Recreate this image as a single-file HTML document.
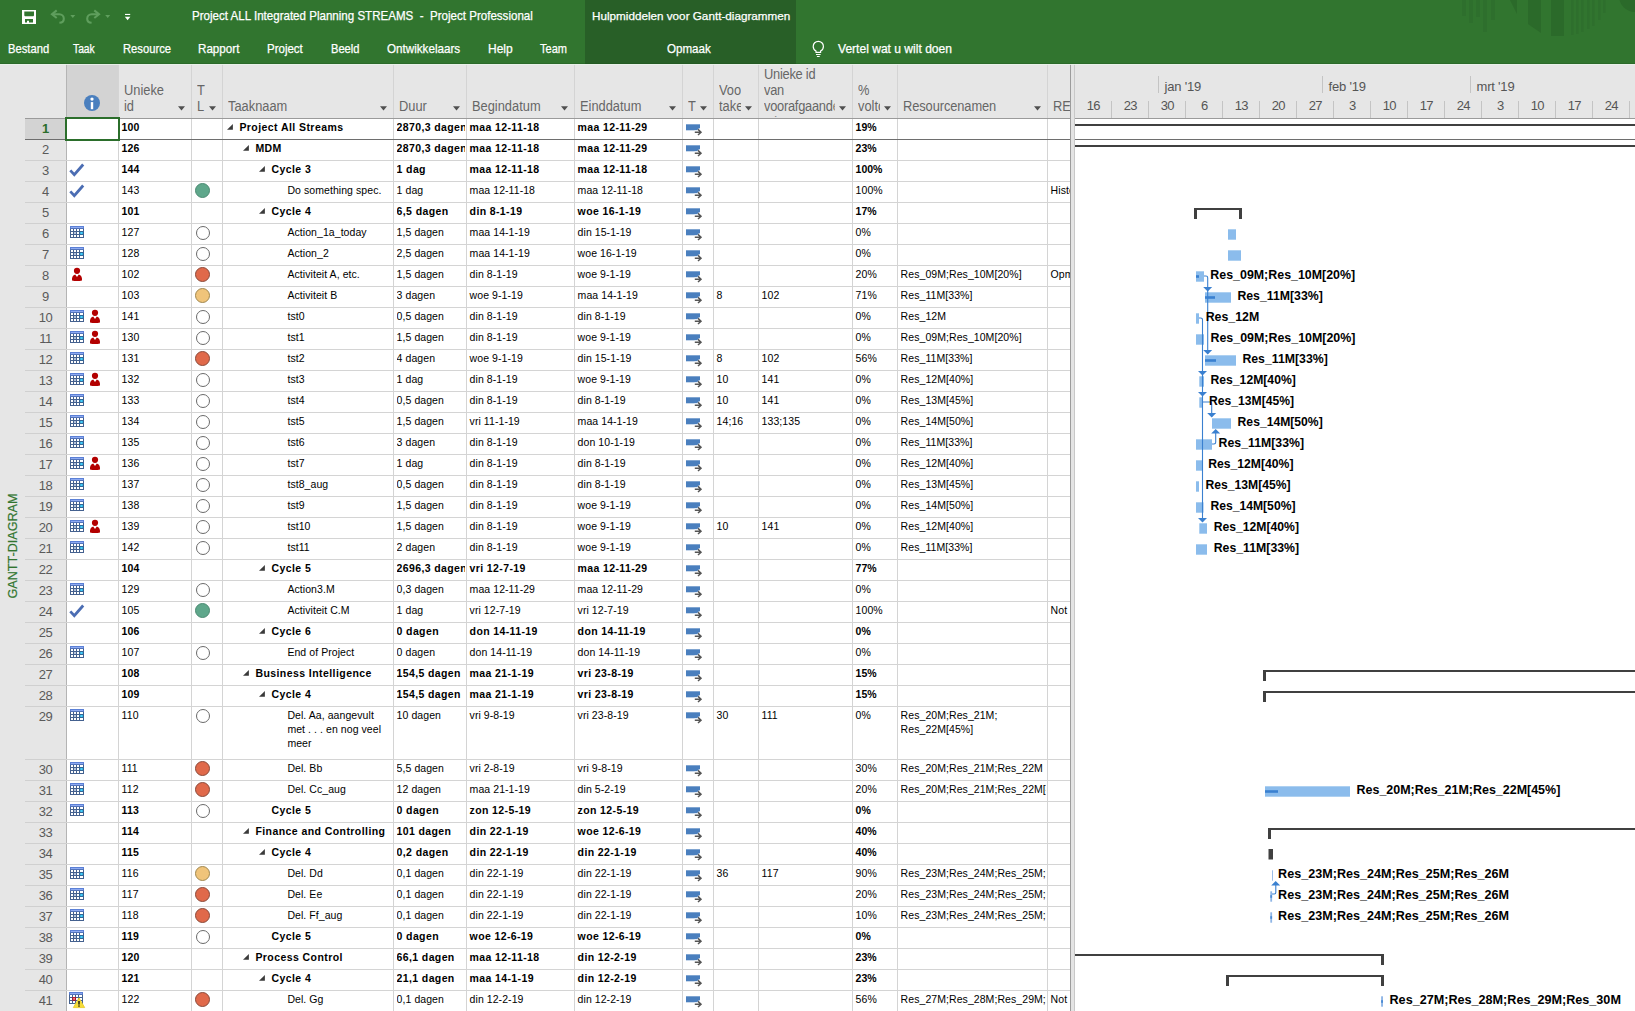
<!DOCTYPE html>
<html lang="nl"><head><meta charset="utf-8"><title>Project ALL Integrated Planning STREAMS - Project Professional</title>
<style>
*{box-sizing:border-box}
html,body{margin:0;padding:0}
body{width:1635px;height:1011px;overflow:hidden;position:relative;background:#fff;font-family:"Liberation Sans",Arial,sans-serif;}
.abs{position:absolute}
#ribbon{position:absolute;left:0;top:0;width:1635px;height:64px;background:#31752f;overflow:hidden}
#ctx{position:absolute;left:585px;top:0;width:211px;height:64px;background:#285f27}
.rt{position:absolute;color:#fff;font-size:11.6px;white-space:nowrap;line-height:14px;-webkit-text-stroke:.25px #fff}
#side{position:absolute;left:0;top:64px;width:25px;height:947px;background:#e6e6e6}
#vt{position:absolute;left:12.5px;top:482px;width:0;height:0}
#vt span{position:absolute;display:block;white-space:nowrap;color:#31752f;-webkit-text-stroke:.2px #31752f;font-size:12.6px;line-height:14px;transform:translate(-50%,-50%) rotate(-90deg);transform-origin:50% 50%;left:0;top:0}
#thead{position:absolute;left:25px;top:64px;width:1045px;height:55px;background:#e6e6e6;border-bottom:1px solid #9a9a9a}
.hc{position:absolute;top:0;height:54px;border-left:1px solid #d4d4d4;overflow:hidden}
.ht{position:absolute;left:5px;bottom:4.2px;color:#666;font-size:14px;line-height:16px;white-space:nowrap;overflow:hidden;transform:scaleX(.918);transform-origin:0 100%}
.dd{position:absolute;bottom:7px;width:0;height:0;border-left:3.7px solid transparent;border-right:3.7px solid transparent;border-top:4.2px solid #555}
#rows{position:absolute;left:25px;top:119px;width:1045px;height:892px;background:#fff;overflow:hidden}
.r{position:absolute;left:0;width:1045px;border-bottom:1px solid #d4d4d4}
.rn{position:absolute;left:0;top:0;width:41px;bottom:-1px;background:#e6e6e6;border-bottom:1px solid #d0d0d0;color:#5a5a5a;font-size:13px;line-height:15px;text-align:center;padding-top:2px;letter-spacing:-.45px}
.c{position:absolute;top:0;bottom:0;border-left:1px solid #d4d4d4;font-size:10.5px;letter-spacing:.07px;line-height:14px;padding:.8px 0 0 2.6px;white-space:nowrap;overflow:hidden;color:#000}
.b .c{font-weight:bold;font-size:10.5px;letter-spacing:.38px}
.w{white-space:normal}
.circ{position:absolute;left:2.8px;top:1px;width:15.4px;height:15.4px;border-radius:50%;border:1px solid #555}
.tri{position:absolute;top:5px;width:0;height:0;border-bottom:5.7px solid #404040;border-left:5.9px solid transparent}
svg{position:absolute;left:0;top:0;overflow:visible}
#divider{position:absolute;left:1070px;top:64px;width:5px;height:947px;background:#e4e4e4;border-left:1px solid #9c9c9c;border-right:1px solid #c8c8c8}
#ghead{position:absolute;left:1075px;top:64px;width:560px;height:55px;background:#e6e6e6;border-bottom:1px solid #9a9a9a;overflow:hidden}
.gt{position:absolute;color:#555;font-size:13px;line-height:15px;white-space:nowrap}
</style></head><body>

<div id="ribbon">
<svg width="1635" height="64" viewBox="0 0 1635 64">
<rect x="1462" y="0" width="4" height="16" fill="#2e6f2d"/>
<rect x="1469" y="0" width="4" height="23" fill="#2e6f2d"/>
<rect x="1476" y="0" width="4" height="17" fill="#2e6f2d"/>
<rect x="1483" y="0" width="4" height="32" fill="#2e6f2d"/>
<rect x="1491" y="0" width="4" height="20" fill="#2e6f2d"/>
<polygon points="1510,0 1517,0 1517,14" fill="#2b6a2a"/>
<polygon points="1528,0 1541,0 1541,33 1528,24" fill="#2b6a2a"/>
<rect x="1551" y="0" width="13" height="36" fill="#2b6a2a"/>
<rect x="1571" y="0" width="2.5" height="35" fill="#2e6f2d"/>
<rect x="1576" y="0" width="2.5" height="34" fill="#2e6f2d"/>
<rect x="1581" y="0" width="2.5" height="32" fill="#2e6f2d"/>
<rect x="1587" y="0" width="2.5" height="29" fill="#2e6f2d"/>
<rect x="1592" y="0" width="2.5" height="26" fill="#2e6f2d"/>
<rect x="1598" y="0" width="2.5" height="20" fill="#2e6f2d"/>
<rect x="1603" y="0" width="2.5" height="13" fill="#2e6f2d"/>
<circle cx="1635" cy="-4" r="16" fill="#2b6a2a"/>
</svg>
<div class="abs" style="left:0;top:63px;width:1635px;height:1px;background:#2b6a2a"></div>
<div id="ctx"></div>
<div class="abs" style="left:585px;top:63px;width:211px;height:1px;background:#245a23"></div>
<svg width="160" height="40" viewBox="0 0 160 40">
<rect x="22" y="10" width="14" height="14" fill="#fff"/>
<polygon points="24.300,11.400 34,11.400 34,15.600 33.300,16.300 25,16.300 24.300,15.600" fill="#31752f"/>
<path d="M25 19h8v3.500h-4v-1.700h-2v1.700h-2z" fill="#31752f"/>
<g fill="none" stroke="#5f9e5d" stroke-width="2.100" stroke-linecap="butt" stroke-linejoin="miter">
<path d="M56.700 10.400L52 14.200l4.700 3.800"/><path d="M52.800 14.200H59.300a4.500 4.500 0 0 1 4.500 4.500c0 2.300-1.800 3.900-4.400 4.100"/>
<path d="M94.300 10.400L99 14.200l-4.700 3.800"/><path d="M98.200 14.200H91.700a4.500 4.500 0 0 0-4.500 4.500c0 2.300 1.800 3.900 4.400 4.100"/>
</g>
<polygon points="70.300,15 75.300,15 72.800,17.900" fill="#5f9e5d"/>
<polygon points="105.200,15 110.200,15 107.700,17.900" fill="#5f9e5d"/>
<rect x="125" y="13.900" width="5.200" height="1.100" fill="#fff"/>
<polygon points="124.800,16.800 130.400,16.800 127.600,20.200" fill="#fff"/>
</svg>
<div class="rt" style="left:8.40px;top:41.57px;font-size:12.2px;transform:scaleX(0.9200);transform-origin:0 0">Bestand</div>
<div class="rt" style="left:73.20px;top:41.57px;font-size:12.2px;transform:scaleX(0.8444);transform-origin:0 0">Taak</div>
<div class="rt" style="left:123.30px;top:41.57px;font-size:12.2px;transform:scaleX(0.9212);transform-origin:0 0">Resource</div>
<div class="rt" style="left:198.00px;top:41.57px;font-size:12.2px;transform:scaleX(0.9545);transform-origin:0 0">Rapport</div>
<div class="rt" style="left:267.20px;top:41.57px;font-size:12.2px;transform:scaleX(0.9436);transform-origin:0 0">Project</div>
<div class="rt" style="left:331.30px;top:41.57px;font-size:12.2px;transform:scaleX(0.9129);transform-origin:0 0">Beeld</div>
<div class="rt" style="left:387.20px;top:41.57px;font-size:12.2px;transform:scaleX(0.9558);transform-origin:0 0">Ontwikkelaars</div>
<div class="rt" style="left:488.00px;top:41.57px;font-size:12.2px;transform:scaleX(0.9840);transform-origin:0 0">Help</div>
<div class="rt" style="left:540.20px;top:41.57px;font-size:12.2px;transform:scaleX(0.9067);transform-origin:0 0">Team</div>
<div class="rt" style="left:667.30px;top:41.57px;font-size:12.2px;transform:scaleX(0.9511);transform-origin:0 0">Opmaak</div>
<div class="rt" style="left:192.20px;top:8.97px;font-size:12.2px;transform:scaleX(0.9487);transform-origin:0 0">Project ALL Integrated Planning STREAMS&nbsp; - &nbsp;Project Professional</div>
<div class="rt" style="left:592.30px;top:9.11px;font-size:11.8px;transform:scaleX(0.9915);transform-origin:0 0">Hulpmiddelen voor Gantt-diagrammen</div>
<div class="rt" style="left:838.30px;top:41.57px;font-size:12.2px;transform:scaleX(0.9896);transform-origin:0 0">Vertel wat u wilt doen</div>
<svg width="1635" height="64" viewBox="0 0 1635 64"><g fill="none" stroke="#fff" stroke-width="1.200">
<path d="M816 52.400v-1.300c-1.700-1-2.800-2.700-2.800-4.700a5.100 5.100 0 0 1 10.200 0c0 2-1.100 3.700-2.800 4.700v1.300z"/>
<path d="M816 54.500h4.600M816.900 56.500h2.800"/></g></svg>
</div>
<div id="side"><div id="vt"><span>GANTT-DIAGRAM</span></div></div>
<div id="thead">
<div class="abs" style="left:42px;top:0;width:51px;height:54px;background:#d3d3d3"></div>
<div class="hc" style="left:41px;width:52px;border-left-color:#b4b4b4">
</div>
<div class="hc" style="left:93px;width:73px;border-left-color:#d4d4d4">
<div class="ht" style="width:54.5px">Unieke<br>id</div>
<svg class="ic" style="right:5.800px;bottom:7px;left:auto;top:auto" width="7" height="5" viewBox="0 0 7 5"><polygon points="0,0.300 7,0.300 3.500,4.400" fill="#505050"/></svg>
</div>
<div class="hc" style="left:166px;width:31px;border-left-color:#d4d4d4">
<div class="ht" style="width:8.7px">T<br>L</div>
<svg class="ic" style="right:5.800px;bottom:7px;left:auto;top:auto" width="7" height="5" viewBox="0 0 7 5"><polygon points="0,0.300 7,0.300 3.500,4.400" fill="#505050"/></svg>
</div>
<div class="hc" style="left:197px;width:171px;border-left-color:#d4d4d4">
<div class="ht" style="width:161.2px">Taaknaam</div>
<svg class="ic" style="right:5.800px;bottom:7px;left:auto;top:auto" width="7" height="5" viewBox="0 0 7 5"><polygon points="0,0.300 7,0.300 3.500,4.400" fill="#505050"/></svg>
</div>
<div class="hc" style="left:368px;width:73px;border-left-color:#d4d4d4">
<div class="ht" style="width:54.5px">Duur</div>
<svg class="ic" style="right:5.800px;bottom:7px;left:auto;top:auto" width="7" height="5" viewBox="0 0 7 5"><polygon points="0,0.300 7,0.300 3.500,4.400" fill="#505050"/></svg>
</div>
<div class="hc" style="left:441px;width:108px;border-left-color:#d4d4d4">
<div class="ht" style="width:92.6px">Begindatum</div>
<svg class="ic" style="right:5.800px;bottom:7px;left:auto;top:auto" width="7" height="5" viewBox="0 0 7 5"><polygon points="0,0.300 7,0.300 3.500,4.400" fill="#505050"/></svg>
</div>
<div class="hc" style="left:549px;width:108px;border-left-color:#d4d4d4">
<div class="ht" style="width:92.6px">Einddatum</div>
<svg class="ic" style="right:5.800px;bottom:7px;left:auto;top:auto" width="7" height="5" viewBox="0 0 7 5"><polygon points="0,0.300 7,0.300 3.500,4.400" fill="#505050"/></svg>
</div>
<div class="hc" style="left:657px;width:31px;border-left-color:#d4d4d4">
<div class="ht" style="width:8.7px">T</div>
<svg class="ic" style="right:5.800px;bottom:7px;left:auto;top:auto" width="7" height="5" viewBox="0 0 7 5"><polygon points="0,0.300 7,0.300 3.500,4.400" fill="#505050"/></svg>
</div>
<div class="hc" style="left:688px;width:45px;border-left-color:#d4d4d4">
<div class="ht" style="width:24.0px">Voo<br>take</div>
<svg class="ic" style="right:5.800px;bottom:7px;left:auto;top:auto" width="7" height="5" viewBox="0 0 7 5"><polygon points="0,0.300 7,0.300 3.500,4.400" fill="#505050"/></svg>
</div>
<div class="hc" style="left:733px;width:94px;border-left-color:#d4d4d4">
<div class="ht" style="width:77.3px;bottom:-12px;height:64px;clip-path:inset(0 0 13.200px 0);letter-spacing:-0.28px">Unieke id<br>van<br>voorafgaande<br>taken</div>
<svg class="ic" style="right:5.800px;bottom:7px;left:auto;top:auto" width="7" height="5" viewBox="0 0 7 5"><polygon points="0,0.300 7,0.300 3.500,4.400" fill="#505050"/></svg>
</div>
<div class="hc" style="left:827px;width:45px;border-left-color:#d4d4d4">
<div class="ht" style="width:24.0px">%<br>volto</div>
<svg class="ic" style="right:5.800px;bottom:7px;left:auto;top:auto" width="7" height="5" viewBox="0 0 7 5"><polygon points="0,0.300 7,0.300 3.500,4.400" fill="#505050"/></svg>
</div>
<div class="hc" style="left:872px;width:150px;border-left-color:#d4d4d4">
<div class="ht" style="width:138.3px;letter-spacing:-0.1px">Resourcenamen</div>
<svg class="ic" style="right:5.800px;bottom:7px;left:auto;top:auto" width="7" height="5" viewBox="0 0 7 5"><polygon points="0,0.300 7,0.300 3.500,4.400" fill="#505050"/></svg>
</div>
<div class="hc" style="left:1022px;width:23px;border-left-color:#d4d4d4">
<div class="ht" style="width:18.5px">RE</div>
</div>
<svg width="1045" height="55" viewBox="25 64 1045 55"><circle cx="92" cy="103" r="8" fill="#4a7fbe"/><circle cx="92" cy="99.100" r="1.650" fill="#fff"/><rect x="90.800" y="102.100" width="2.400" height="7.100" fill="#fff"/></svg>
</div>
<style>.ic{position:absolute;left:auto;top:auto}</style>
<div id="rows">
<div class="r b" style="top:0px;height:21px">
<div class="rn" style="background:#d3d3d3;color:#2b6e2b;font-weight:bold">1</div>
<div class="c" style="left:41px;width:52px ;border-left-color:#b4b4b4"></div>
<div class="c" style="left:93px;width:73px;letter-spacing:.1px">100</div>
<div class="c" style="left:166px;width:31px"></div>
<div class="c" style="left:197px;width:171px;padding-left:16.4px;letter-spacing:.43px"><svg class="ic" style="left:3.8px;top:5.4px" width="7" height="7" viewBox="0 0 7 7"><polygon points="5.900,0 5.900,5.700 0,5.700" fill="#3a3a3a"/></svg>Project All Streams</div>
<div class="c" style="left:368px;width:73px"><div style="overflow:hidden;width:68px">2870,3 dagen</div></div>
<div class="c" style="left:441px;width:108px">maa 12-11-18</div>
<div class="c" style="left:549px;width:108px">maa 12-11-29</div>
<div class="c" style="left:657px;width:31px"><svg class="ic" style="left:3px;top:5px" width="18" height="13" viewBox="0 0 18 13"><rect x="0" y="0.300" width="14" height="6" fill="#4a7fbe"/><path d="M8.500 8.200h6M12 5.200l3.200 3-3.200 3" fill="none" stroke="#fff" stroke-width="3.400"/><path d="M8.800 8.200h6M12 5.400l3 2.800-3 2.800" fill="none" stroke="#555" stroke-width="1.500"/></svg></div>
<div class="c" style="left:688px;width:45px"></div>
<div class="c" style="left:733px;width:94px"></div>
<div class="c" style="left:827px;width:45px;letter-spacing:0">19%</div>
<div class="c" style="left:872px;width:150px;padding-right:3px"></div>
<div class="c" style="left:1022px;width:23px"></div>
</div>
<div class="r b" style="top:21px;height:21px">
<div class="rn">2</div>
<div class="c" style="left:41px;width:52px ;border-left-color:#b4b4b4"></div>
<div class="c" style="left:93px;width:73px;letter-spacing:.1px">126</div>
<div class="c" style="left:166px;width:31px"></div>
<div class="c" style="left:197px;width:171px;padding-left:32.4px;letter-spacing:.43px"><svg class="ic" style="left:19.8px;top:5.4px" width="7" height="7" viewBox="0 0 7 7"><polygon points="5.900,0 5.900,5.700 0,5.700" fill="#3a3a3a"/></svg>MDM</div>
<div class="c" style="left:368px;width:73px"><div style="overflow:hidden;width:68px">2870,3 dagen</div></div>
<div class="c" style="left:441px;width:108px">maa 12-11-18</div>
<div class="c" style="left:549px;width:108px">maa 12-11-29</div>
<div class="c" style="left:657px;width:31px"><svg class="ic" style="left:3px;top:5px" width="18" height="13" viewBox="0 0 18 13"><rect x="0" y="0.300" width="14" height="6" fill="#4a7fbe"/><path d="M8.500 8.200h6M12 5.200l3.200 3-3.200 3" fill="none" stroke="#fff" stroke-width="3.400"/><path d="M8.800 8.200h6M12 5.400l3 2.800-3 2.800" fill="none" stroke="#555" stroke-width="1.500"/></svg></div>
<div class="c" style="left:688px;width:45px"></div>
<div class="c" style="left:733px;width:94px"></div>
<div class="c" style="left:827px;width:45px;letter-spacing:0">23%</div>
<div class="c" style="left:872px;width:150px;padding-right:3px"></div>
<div class="c" style="left:1022px;width:23px"></div>
</div>
<div class="r b" style="top:42px;height:21px">
<div class="rn">3</div>
<div class="c" style="left:41px;width:52px ;border-left-color:#b4b4b4"><svg class="ic" style="left:2px;top:2px" width="16" height="14" viewBox="0 0 16 14"><path d="M1.300 7.400l4 4.200L14.200 1.500" fill="none" stroke="#4b6db3" stroke-width="2.800"/></svg></div>
<div class="c" style="left:93px;width:73px;letter-spacing:.1px">144</div>
<div class="c" style="left:166px;width:31px"></div>
<div class="c" style="left:197px;width:171px;padding-left:48.4px;letter-spacing:.43px"><svg class="ic" style="left:35.8px;top:5.4px" width="7" height="7" viewBox="0 0 7 7"><polygon points="5.900,0 5.900,5.700 0,5.700" fill="#3a3a3a"/></svg>Cycle 3</div>
<div class="c" style="left:368px;width:73px"><div style="overflow:hidden;width:68px">1 dag</div></div>
<div class="c" style="left:441px;width:108px">maa 12-11-18</div>
<div class="c" style="left:549px;width:108px">maa 12-11-18</div>
<div class="c" style="left:657px;width:31px"><svg class="ic" style="left:3px;top:5px" width="18" height="13" viewBox="0 0 18 13"><rect x="0" y="0.300" width="14" height="6" fill="#4a7fbe"/><path d="M8.500 8.200h6M12 5.200l3.200 3-3.200 3" fill="none" stroke="#fff" stroke-width="3.400"/><path d="M8.800 8.200h6M12 5.400l3 2.800-3 2.800" fill="none" stroke="#555" stroke-width="1.500"/></svg></div>
<div class="c" style="left:688px;width:45px"></div>
<div class="c" style="left:733px;width:94px"></div>
<div class="c" style="left:827px;width:45px;letter-spacing:0">100%</div>
<div class="c" style="left:872px;width:150px;padding-right:3px"></div>
<div class="c" style="left:1022px;width:23px"></div>
</div>
<div class="r" style="top:63px;height:21px">
<div class="rn">4</div>
<div class="c" style="left:41px;width:52px ;border-left-color:#b4b4b4"><svg class="ic" style="left:2px;top:2px" width="16" height="14" viewBox="0 0 16 14"><path d="M1.300 7.400l4 4.200L14.200 1.500" fill="none" stroke="#4b6db3" stroke-width="2.800"/></svg></div>
<div class="c" style="left:93px;width:73px">143</div>
<div class="c" style="left:166px;width:31px"><div class="circ" style="background:#5fa78b;border-color:#4c8a72"></div></div>
<div class="c" style="left:197px;width:171px;padding-left:64.4px">Do something spec.</div>
<div class="c" style="left:368px;width:73px"><div style="overflow:hidden;width:68px">1 dag</div></div>
<div class="c" style="left:441px;width:108px">maa 12-11-18</div>
<div class="c" style="left:549px;width:108px">maa 12-11-18</div>
<div class="c" style="left:657px;width:31px"><svg class="ic" style="left:3px;top:5px" width="18" height="13" viewBox="0 0 18 13"><rect x="0" y="0.300" width="14" height="6" fill="#4a7fbe"/><path d="M8.500 8.200h6M12 5.200l3.200 3-3.200 3" fill="none" stroke="#fff" stroke-width="3.400"/><path d="M8.800 8.200h6M12 5.400l3 2.800-3 2.800" fill="none" stroke="#555" stroke-width="1.500"/></svg></div>
<div class="c" style="left:688px;width:45px"></div>
<div class="c" style="left:733px;width:94px"></div>
<div class="c" style="left:827px;width:45px">100%</div>
<div class="c" style="left:872px;width:150px;padding-right:3px"></div>
<div class="c" style="left:1022px;width:23px">History</div>
</div>
<div class="r b" style="top:84px;height:21px">
<div class="rn">5</div>
<div class="c" style="left:41px;width:52px ;border-left-color:#b4b4b4"></div>
<div class="c" style="left:93px;width:73px;letter-spacing:.1px">101</div>
<div class="c" style="left:166px;width:31px"></div>
<div class="c" style="left:197px;width:171px;padding-left:48.4px;letter-spacing:.43px"><svg class="ic" style="left:35.8px;top:5.4px" width="7" height="7" viewBox="0 0 7 7"><polygon points="5.900,0 5.900,5.700 0,5.700" fill="#3a3a3a"/></svg>Cycle 4</div>
<div class="c" style="left:368px;width:73px"><div style="overflow:hidden;width:68px">6,5 dagen</div></div>
<div class="c" style="left:441px;width:108px">din 8-1-19</div>
<div class="c" style="left:549px;width:108px">woe 16-1-19</div>
<div class="c" style="left:657px;width:31px"><svg class="ic" style="left:3px;top:5px" width="18" height="13" viewBox="0 0 18 13"><rect x="0" y="0.300" width="14" height="6" fill="#4a7fbe"/><path d="M8.500 8.200h6M12 5.200l3.200 3-3.200 3" fill="none" stroke="#fff" stroke-width="3.400"/><path d="M8.800 8.200h6M12 5.400l3 2.800-3 2.800" fill="none" stroke="#555" stroke-width="1.500"/></svg></div>
<div class="c" style="left:688px;width:45px"></div>
<div class="c" style="left:733px;width:94px"></div>
<div class="c" style="left:827px;width:45px;letter-spacing:0">17%</div>
<div class="c" style="left:872px;width:150px;padding-right:3px"></div>
<div class="c" style="left:1022px;width:23px"></div>
</div>
<div class="r" style="top:105px;height:21px">
<div class="rn">6</div>
<div class="c" style="left:41px;width:52px ;border-left-color:#b4b4b4"><svg class="ic" style="left:3px;top:2px" width="14" height="12" viewBox="0 0 14 12"><rect x="0" y="0" width="14" height="12" fill="#44618f"/><rect x="0" y="0" width="14" height="2.600" fill="#5b80d6"/><rect x="1" y="1" width="12" height="1" fill="#8eaaf2"/>
<g fill="#fff"><rect x="1" y="3" width="2" height="2"/><rect x="4" y="3" width="2" height="2"/><rect x="7" y="3" width="2" height="2"/><rect x="10" y="3" width="3" height="2"/>
<rect x="1" y="6" width="2" height="2"/><rect x="4" y="6" width="2" height="2" fill="#b4c3dc"/><rect x="7" y="6" width="2" height="2"/>
<rect x="1" y="9" width="2" height="2"/><rect x="4" y="9" width="2" height="2"/><rect x="7" y="9" width="2" height="2"/><rect x="10" y="9" width="3" height="2"/></g>
<rect x="9.500" y="5.500" width="4" height="3" fill="#1d6c9c"/><rect x="10.300" y="6" width="2.400" height="2" fill="#45cdfb"/></svg></div>
<div class="c" style="left:93px;width:73px">127</div>
<div class="c" style="left:166px;width:31px"><div class="circ" style="background:#fff;border-color:#6a6a6a;left:3.6px;top:1.8px;width:14px;height:14px"></div></div>
<div class="c" style="left:197px;width:171px;padding-left:64.4px">Action_1a_today</div>
<div class="c" style="left:368px;width:73px"><div style="overflow:hidden;width:68px">1,5 dagen</div></div>
<div class="c" style="left:441px;width:108px">maa 14-1-19</div>
<div class="c" style="left:549px;width:108px">din 15-1-19</div>
<div class="c" style="left:657px;width:31px"><svg class="ic" style="left:3px;top:5px" width="18" height="13" viewBox="0 0 18 13"><rect x="0" y="0.300" width="14" height="6" fill="#4a7fbe"/><path d="M8.500 8.200h6M12 5.200l3.200 3-3.200 3" fill="none" stroke="#fff" stroke-width="3.400"/><path d="M8.800 8.200h6M12 5.400l3 2.800-3 2.800" fill="none" stroke="#555" stroke-width="1.500"/></svg></div>
<div class="c" style="left:688px;width:45px"></div>
<div class="c" style="left:733px;width:94px"></div>
<div class="c" style="left:827px;width:45px">0%</div>
<div class="c" style="left:872px;width:150px;padding-right:3px"></div>
<div class="c" style="left:1022px;width:23px"></div>
</div>
<div class="r" style="top:126px;height:21px">
<div class="rn">7</div>
<div class="c" style="left:41px;width:52px ;border-left-color:#b4b4b4"><svg class="ic" style="left:3px;top:2px" width="14" height="12" viewBox="0 0 14 12"><rect x="0" y="0" width="14" height="12" fill="#44618f"/><rect x="0" y="0" width="14" height="2.600" fill="#5b80d6"/><rect x="1" y="1" width="12" height="1" fill="#8eaaf2"/>
<g fill="#fff"><rect x="1" y="3" width="2" height="2"/><rect x="4" y="3" width="2" height="2"/><rect x="7" y="3" width="2" height="2"/><rect x="10" y="3" width="3" height="2"/>
<rect x="1" y="6" width="2" height="2"/><rect x="4" y="6" width="2" height="2" fill="#b4c3dc"/><rect x="7" y="6" width="2" height="2"/>
<rect x="1" y="9" width="2" height="2"/><rect x="4" y="9" width="2" height="2"/><rect x="7" y="9" width="2" height="2"/><rect x="10" y="9" width="3" height="2"/></g>
<rect x="9.500" y="5.500" width="4" height="3" fill="#1d6c9c"/><rect x="10.300" y="6" width="2.400" height="2" fill="#45cdfb"/></svg></div>
<div class="c" style="left:93px;width:73px">128</div>
<div class="c" style="left:166px;width:31px"><div class="circ" style="background:#fff;border-color:#6a6a6a;left:3.6px;top:1.8px;width:14px;height:14px"></div></div>
<div class="c" style="left:197px;width:171px;padding-left:64.4px">Action_2</div>
<div class="c" style="left:368px;width:73px"><div style="overflow:hidden;width:68px">2,5 dagen</div></div>
<div class="c" style="left:441px;width:108px">maa 14-1-19</div>
<div class="c" style="left:549px;width:108px">woe 16-1-19</div>
<div class="c" style="left:657px;width:31px"><svg class="ic" style="left:3px;top:5px" width="18" height="13" viewBox="0 0 18 13"><rect x="0" y="0.300" width="14" height="6" fill="#4a7fbe"/><path d="M8.500 8.200h6M12 5.200l3.200 3-3.200 3" fill="none" stroke="#fff" stroke-width="3.400"/><path d="M8.800 8.200h6M12 5.400l3 2.800-3 2.800" fill="none" stroke="#555" stroke-width="1.500"/></svg></div>
<div class="c" style="left:688px;width:45px"></div>
<div class="c" style="left:733px;width:94px"></div>
<div class="c" style="left:827px;width:45px">0%</div>
<div class="c" style="left:872px;width:150px;padding-right:3px"></div>
<div class="c" style="left:1022px;width:23px"></div>
</div>
<div class="r" style="top:147px;height:21px">
<div class="rn">8</div>
<div class="c" style="left:41px;width:52px ;border-left-color:#b4b4b4"><svg class="ic" style="left:4.1px;top:1px" width="12" height="14" viewBox="0 0 12 14"><circle cx="6" cy="3.800" r="3.100" fill="#b30000"/><path d="M1 13.400c-.3-3.400.8-5.600 3.200-6l1.800 2.600 1.800-2.600c2.400.4 3.500 2.600 3.200 6-2.800.8-7.200.8-10 0z" fill="#b30000"/></svg></div>
<div class="c" style="left:93px;width:73px">102</div>
<div class="c" style="left:166px;width:31px"><div class="circ" style="background:#e0694a;border-color:#8a4a3a"></div></div>
<div class="c" style="left:197px;width:171px;padding-left:64.4px">Activiteit A, etc.</div>
<div class="c" style="left:368px;width:73px"><div style="overflow:hidden;width:68px">1,5 dagen</div></div>
<div class="c" style="left:441px;width:108px">din 8-1-19</div>
<div class="c" style="left:549px;width:108px">woe 9-1-19</div>
<div class="c" style="left:657px;width:31px"><svg class="ic" style="left:3px;top:5px" width="18" height="13" viewBox="0 0 18 13"><rect x="0" y="0.300" width="14" height="6" fill="#4a7fbe"/><path d="M8.500 8.200h6M12 5.200l3.200 3-3.200 3" fill="none" stroke="#fff" stroke-width="3.400"/><path d="M8.800 8.200h6M12 5.400l3 2.800-3 2.800" fill="none" stroke="#555" stroke-width="1.500"/></svg></div>
<div class="c" style="left:688px;width:45px"></div>
<div class="c" style="left:733px;width:94px"></div>
<div class="c" style="left:827px;width:45px">20%</div>
<div class="c" style="left:872px;width:150px;padding-right:3px"><div style="overflow:hidden;width:145px">Res_09M;Res_10M[20%]</div></div>
<div class="c" style="left:1022px;width:23px">Opmerking</div>
</div>
<div class="r" style="top:168px;height:21px">
<div class="rn">9</div>
<div class="c" style="left:41px;width:52px ;border-left-color:#b4b4b4"></div>
<div class="c" style="left:93px;width:73px">103</div>
<div class="c" style="left:166px;width:31px"><div class="circ" style="background:#f0c47a;border-color:#a08850"></div></div>
<div class="c" style="left:197px;width:171px;padding-left:64.4px">Activiteit B</div>
<div class="c" style="left:368px;width:73px"><div style="overflow:hidden;width:68px">3 dagen</div></div>
<div class="c" style="left:441px;width:108px">woe 9-1-19</div>
<div class="c" style="left:549px;width:108px">maa 14-1-19</div>
<div class="c" style="left:657px;width:31px"><svg class="ic" style="left:3px;top:5px" width="18" height="13" viewBox="0 0 18 13"><rect x="0" y="0.300" width="14" height="6" fill="#4a7fbe"/><path d="M8.500 8.200h6M12 5.200l3.200 3-3.200 3" fill="none" stroke="#fff" stroke-width="3.400"/><path d="M8.800 8.200h6M12 5.400l3 2.800-3 2.800" fill="none" stroke="#555" stroke-width="1.500"/></svg></div>
<div class="c" style="left:688px;width:45px">8</div>
<div class="c" style="left:733px;width:94px">102</div>
<div class="c" style="left:827px;width:45px">71%</div>
<div class="c" style="left:872px;width:150px;padding-right:3px"><div style="overflow:hidden;width:145px">Res_11M[33%]</div></div>
<div class="c" style="left:1022px;width:23px"></div>
</div>
<div class="r" style="top:189px;height:21px">
<div class="rn">10</div>
<div class="c" style="left:41px;width:52px ;border-left-color:#b4b4b4"><svg class="ic" style="left:3px;top:2px" width="14" height="12" viewBox="0 0 14 12"><rect x="0" y="0" width="14" height="12" fill="#44618f"/><rect x="0" y="0" width="14" height="2.600" fill="#5b80d6"/><rect x="1" y="1" width="12" height="1" fill="#8eaaf2"/>
<g fill="#fff"><rect x="1" y="3" width="2" height="2"/><rect x="4" y="3" width="2" height="2"/><rect x="7" y="3" width="2" height="2"/><rect x="10" y="3" width="3" height="2"/>
<rect x="1" y="6" width="2" height="2"/><rect x="4" y="6" width="2" height="2" fill="#b4c3dc"/><rect x="7" y="6" width="2" height="2"/>
<rect x="1" y="9" width="2" height="2"/><rect x="4" y="9" width="2" height="2"/><rect x="7" y="9" width="2" height="2"/><rect x="10" y="9" width="3" height="2"/></g>
<rect x="9.500" y="5.500" width="4" height="3" fill="#1d6c9c"/><rect x="10.300" y="6" width="2.400" height="2" fill="#45cdfb"/></svg><svg class="ic" style="left:22.1px;top:1px" width="12" height="14" viewBox="0 0 12 14"><circle cx="6" cy="3.800" r="3.100" fill="#b30000"/><path d="M1 13.400c-.3-3.400.8-5.600 3.200-6l1.800 2.600 1.800-2.600c2.400.4 3.500 2.600 3.200 6-2.800.8-7.200.8-10 0z" fill="#b30000"/></svg></div>
<div class="c" style="left:93px;width:73px">141</div>
<div class="c" style="left:166px;width:31px"><div class="circ" style="background:#fff;border-color:#6a6a6a;left:3.6px;top:1.8px;width:14px;height:14px"></div></div>
<div class="c" style="left:197px;width:171px;padding-left:64.4px">tst0</div>
<div class="c" style="left:368px;width:73px"><div style="overflow:hidden;width:68px">0,5 dagen</div></div>
<div class="c" style="left:441px;width:108px">din 8-1-19</div>
<div class="c" style="left:549px;width:108px">din 8-1-19</div>
<div class="c" style="left:657px;width:31px"><svg class="ic" style="left:3px;top:5px" width="18" height="13" viewBox="0 0 18 13"><rect x="0" y="0.300" width="14" height="6" fill="#4a7fbe"/><path d="M8.500 8.200h6M12 5.200l3.200 3-3.200 3" fill="none" stroke="#fff" stroke-width="3.400"/><path d="M8.800 8.200h6M12 5.400l3 2.800-3 2.800" fill="none" stroke="#555" stroke-width="1.500"/></svg></div>
<div class="c" style="left:688px;width:45px"></div>
<div class="c" style="left:733px;width:94px"></div>
<div class="c" style="left:827px;width:45px">0%</div>
<div class="c" style="left:872px;width:150px;padding-right:3px"><div style="overflow:hidden;width:145px">Res_12M</div></div>
<div class="c" style="left:1022px;width:23px"></div>
</div>
<div class="r" style="top:210px;height:21px">
<div class="rn">11</div>
<div class="c" style="left:41px;width:52px ;border-left-color:#b4b4b4"><svg class="ic" style="left:3px;top:2px" width="14" height="12" viewBox="0 0 14 12"><rect x="0" y="0" width="14" height="12" fill="#44618f"/><rect x="0" y="0" width="14" height="2.600" fill="#5b80d6"/><rect x="1" y="1" width="12" height="1" fill="#8eaaf2"/>
<g fill="#fff"><rect x="1" y="3" width="2" height="2"/><rect x="4" y="3" width="2" height="2"/><rect x="7" y="3" width="2" height="2"/><rect x="10" y="3" width="3" height="2"/>
<rect x="1" y="6" width="2" height="2"/><rect x="4" y="6" width="2" height="2" fill="#b4c3dc"/><rect x="7" y="6" width="2" height="2"/>
<rect x="1" y="9" width="2" height="2"/><rect x="4" y="9" width="2" height="2"/><rect x="7" y="9" width="2" height="2"/><rect x="10" y="9" width="3" height="2"/></g>
<rect x="9.500" y="5.500" width="4" height="3" fill="#1d6c9c"/><rect x="10.300" y="6" width="2.400" height="2" fill="#45cdfb"/></svg><svg class="ic" style="left:22.1px;top:1px" width="12" height="14" viewBox="0 0 12 14"><circle cx="6" cy="3.800" r="3.100" fill="#b30000"/><path d="M1 13.400c-.3-3.400.8-5.600 3.200-6l1.800 2.600 1.800-2.600c2.400.4 3.500 2.600 3.200 6-2.800.8-7.200.8-10 0z" fill="#b30000"/></svg></div>
<div class="c" style="left:93px;width:73px">130</div>
<div class="c" style="left:166px;width:31px"><div class="circ" style="background:#fff;border-color:#6a6a6a;left:3.6px;top:1.8px;width:14px;height:14px"></div></div>
<div class="c" style="left:197px;width:171px;padding-left:64.4px">tst1</div>
<div class="c" style="left:368px;width:73px"><div style="overflow:hidden;width:68px">1,5 dagen</div></div>
<div class="c" style="left:441px;width:108px">din 8-1-19</div>
<div class="c" style="left:549px;width:108px">woe 9-1-19</div>
<div class="c" style="left:657px;width:31px"><svg class="ic" style="left:3px;top:5px" width="18" height="13" viewBox="0 0 18 13"><rect x="0" y="0.300" width="14" height="6" fill="#4a7fbe"/><path d="M8.500 8.200h6M12 5.200l3.200 3-3.200 3" fill="none" stroke="#fff" stroke-width="3.400"/><path d="M8.800 8.200h6M12 5.400l3 2.800-3 2.800" fill="none" stroke="#555" stroke-width="1.500"/></svg></div>
<div class="c" style="left:688px;width:45px"></div>
<div class="c" style="left:733px;width:94px"></div>
<div class="c" style="left:827px;width:45px">0%</div>
<div class="c" style="left:872px;width:150px;padding-right:3px"><div style="overflow:hidden;width:145px">Res_09M;Res_10M[20%]</div></div>
<div class="c" style="left:1022px;width:23px"></div>
</div>
<div class="r" style="top:231px;height:21px">
<div class="rn">12</div>
<div class="c" style="left:41px;width:52px ;border-left-color:#b4b4b4"><svg class="ic" style="left:3px;top:2px" width="14" height="12" viewBox="0 0 14 12"><rect x="0" y="0" width="14" height="12" fill="#44618f"/><rect x="0" y="0" width="14" height="2.600" fill="#5b80d6"/><rect x="1" y="1" width="12" height="1" fill="#8eaaf2"/>
<g fill="#fff"><rect x="1" y="3" width="2" height="2"/><rect x="4" y="3" width="2" height="2"/><rect x="7" y="3" width="2" height="2"/><rect x="10" y="3" width="3" height="2"/>
<rect x="1" y="6" width="2" height="2"/><rect x="4" y="6" width="2" height="2" fill="#b4c3dc"/><rect x="7" y="6" width="2" height="2"/>
<rect x="1" y="9" width="2" height="2"/><rect x="4" y="9" width="2" height="2"/><rect x="7" y="9" width="2" height="2"/><rect x="10" y="9" width="3" height="2"/></g>
<rect x="9.500" y="5.500" width="4" height="3" fill="#1d6c9c"/><rect x="10.300" y="6" width="2.400" height="2" fill="#45cdfb"/></svg></div>
<div class="c" style="left:93px;width:73px">131</div>
<div class="c" style="left:166px;width:31px"><div class="circ" style="background:#e0694a;border-color:#8a4a3a"></div></div>
<div class="c" style="left:197px;width:171px;padding-left:64.4px">tst2</div>
<div class="c" style="left:368px;width:73px"><div style="overflow:hidden;width:68px">4 dagen</div></div>
<div class="c" style="left:441px;width:108px">woe 9-1-19</div>
<div class="c" style="left:549px;width:108px">din 15-1-19</div>
<div class="c" style="left:657px;width:31px"><svg class="ic" style="left:3px;top:5px" width="18" height="13" viewBox="0 0 18 13"><rect x="0" y="0.300" width="14" height="6" fill="#4a7fbe"/><path d="M8.500 8.200h6M12 5.200l3.200 3-3.200 3" fill="none" stroke="#fff" stroke-width="3.400"/><path d="M8.800 8.200h6M12 5.400l3 2.800-3 2.800" fill="none" stroke="#555" stroke-width="1.500"/></svg></div>
<div class="c" style="left:688px;width:45px">8</div>
<div class="c" style="left:733px;width:94px">102</div>
<div class="c" style="left:827px;width:45px">56%</div>
<div class="c" style="left:872px;width:150px;padding-right:3px"><div style="overflow:hidden;width:145px">Res_11M[33%]</div></div>
<div class="c" style="left:1022px;width:23px"></div>
</div>
<div class="r" style="top:252px;height:21px">
<div class="rn">13</div>
<div class="c" style="left:41px;width:52px ;border-left-color:#b4b4b4"><svg class="ic" style="left:3px;top:2px" width="14" height="12" viewBox="0 0 14 12"><rect x="0" y="0" width="14" height="12" fill="#44618f"/><rect x="0" y="0" width="14" height="2.600" fill="#5b80d6"/><rect x="1" y="1" width="12" height="1" fill="#8eaaf2"/>
<g fill="#fff"><rect x="1" y="3" width="2" height="2"/><rect x="4" y="3" width="2" height="2"/><rect x="7" y="3" width="2" height="2"/><rect x="10" y="3" width="3" height="2"/>
<rect x="1" y="6" width="2" height="2"/><rect x="4" y="6" width="2" height="2" fill="#b4c3dc"/><rect x="7" y="6" width="2" height="2"/>
<rect x="1" y="9" width="2" height="2"/><rect x="4" y="9" width="2" height="2"/><rect x="7" y="9" width="2" height="2"/><rect x="10" y="9" width="3" height="2"/></g>
<rect x="9.500" y="5.500" width="4" height="3" fill="#1d6c9c"/><rect x="10.300" y="6" width="2.400" height="2" fill="#45cdfb"/></svg><svg class="ic" style="left:22.1px;top:1px" width="12" height="14" viewBox="0 0 12 14"><circle cx="6" cy="3.800" r="3.100" fill="#b30000"/><path d="M1 13.400c-.3-3.400.8-5.600 3.200-6l1.800 2.600 1.800-2.600c2.400.4 3.500 2.600 3.200 6-2.800.8-7.200.8-10 0z" fill="#b30000"/></svg></div>
<div class="c" style="left:93px;width:73px">132</div>
<div class="c" style="left:166px;width:31px"><div class="circ" style="background:#fff;border-color:#6a6a6a;left:3.6px;top:1.8px;width:14px;height:14px"></div></div>
<div class="c" style="left:197px;width:171px;padding-left:64.4px">tst3</div>
<div class="c" style="left:368px;width:73px"><div style="overflow:hidden;width:68px">1 dag</div></div>
<div class="c" style="left:441px;width:108px">din 8-1-19</div>
<div class="c" style="left:549px;width:108px">woe 9-1-19</div>
<div class="c" style="left:657px;width:31px"><svg class="ic" style="left:3px;top:5px" width="18" height="13" viewBox="0 0 18 13"><rect x="0" y="0.300" width="14" height="6" fill="#4a7fbe"/><path d="M8.500 8.200h6M12 5.200l3.200 3-3.200 3" fill="none" stroke="#fff" stroke-width="3.400"/><path d="M8.800 8.200h6M12 5.400l3 2.800-3 2.800" fill="none" stroke="#555" stroke-width="1.500"/></svg></div>
<div class="c" style="left:688px;width:45px">10</div>
<div class="c" style="left:733px;width:94px">141</div>
<div class="c" style="left:827px;width:45px">0%</div>
<div class="c" style="left:872px;width:150px;padding-right:3px"><div style="overflow:hidden;width:145px">Res_12M[40%]</div></div>
<div class="c" style="left:1022px;width:23px"></div>
</div>
<div class="r" style="top:273px;height:21px">
<div class="rn">14</div>
<div class="c" style="left:41px;width:52px ;border-left-color:#b4b4b4"><svg class="ic" style="left:3px;top:2px" width="14" height="12" viewBox="0 0 14 12"><rect x="0" y="0" width="14" height="12" fill="#44618f"/><rect x="0" y="0" width="14" height="2.600" fill="#5b80d6"/><rect x="1" y="1" width="12" height="1" fill="#8eaaf2"/>
<g fill="#fff"><rect x="1" y="3" width="2" height="2"/><rect x="4" y="3" width="2" height="2"/><rect x="7" y="3" width="2" height="2"/><rect x="10" y="3" width="3" height="2"/>
<rect x="1" y="6" width="2" height="2"/><rect x="4" y="6" width="2" height="2" fill="#b4c3dc"/><rect x="7" y="6" width="2" height="2"/>
<rect x="1" y="9" width="2" height="2"/><rect x="4" y="9" width="2" height="2"/><rect x="7" y="9" width="2" height="2"/><rect x="10" y="9" width="3" height="2"/></g>
<rect x="9.500" y="5.500" width="4" height="3" fill="#1d6c9c"/><rect x="10.300" y="6" width="2.400" height="2" fill="#45cdfb"/></svg></div>
<div class="c" style="left:93px;width:73px">133</div>
<div class="c" style="left:166px;width:31px"><div class="circ" style="background:#fff;border-color:#6a6a6a;left:3.6px;top:1.8px;width:14px;height:14px"></div></div>
<div class="c" style="left:197px;width:171px;padding-left:64.4px">tst4</div>
<div class="c" style="left:368px;width:73px"><div style="overflow:hidden;width:68px">0,5 dagen</div></div>
<div class="c" style="left:441px;width:108px">din 8-1-19</div>
<div class="c" style="left:549px;width:108px">din 8-1-19</div>
<div class="c" style="left:657px;width:31px"><svg class="ic" style="left:3px;top:5px" width="18" height="13" viewBox="0 0 18 13"><rect x="0" y="0.300" width="14" height="6" fill="#4a7fbe"/><path d="M8.500 8.200h6M12 5.200l3.200 3-3.200 3" fill="none" stroke="#fff" stroke-width="3.400"/><path d="M8.800 8.200h6M12 5.400l3 2.800-3 2.800" fill="none" stroke="#555" stroke-width="1.500"/></svg></div>
<div class="c" style="left:688px;width:45px">10</div>
<div class="c" style="left:733px;width:94px">141</div>
<div class="c" style="left:827px;width:45px">0%</div>
<div class="c" style="left:872px;width:150px;padding-right:3px"><div style="overflow:hidden;width:145px">Res_13M[45%]</div></div>
<div class="c" style="left:1022px;width:23px"></div>
</div>
<div class="r" style="top:294px;height:21px">
<div class="rn">15</div>
<div class="c" style="left:41px;width:52px ;border-left-color:#b4b4b4"><svg class="ic" style="left:3px;top:2px" width="14" height="12" viewBox="0 0 14 12"><rect x="0" y="0" width="14" height="12" fill="#44618f"/><rect x="0" y="0" width="14" height="2.600" fill="#5b80d6"/><rect x="1" y="1" width="12" height="1" fill="#8eaaf2"/>
<g fill="#fff"><rect x="1" y="3" width="2" height="2"/><rect x="4" y="3" width="2" height="2"/><rect x="7" y="3" width="2" height="2"/><rect x="10" y="3" width="3" height="2"/>
<rect x="1" y="6" width="2" height="2"/><rect x="4" y="6" width="2" height="2" fill="#b4c3dc"/><rect x="7" y="6" width="2" height="2"/>
<rect x="1" y="9" width="2" height="2"/><rect x="4" y="9" width="2" height="2"/><rect x="7" y="9" width="2" height="2"/><rect x="10" y="9" width="3" height="2"/></g>
<rect x="9.500" y="5.500" width="4" height="3" fill="#1d6c9c"/><rect x="10.300" y="6" width="2.400" height="2" fill="#45cdfb"/></svg></div>
<div class="c" style="left:93px;width:73px">134</div>
<div class="c" style="left:166px;width:31px"><div class="circ" style="background:#fff;border-color:#6a6a6a;left:3.6px;top:1.8px;width:14px;height:14px"></div></div>
<div class="c" style="left:197px;width:171px;padding-left:64.4px">tst5</div>
<div class="c" style="left:368px;width:73px"><div style="overflow:hidden;width:68px">1,5 dagen</div></div>
<div class="c" style="left:441px;width:108px">vri 11-1-19</div>
<div class="c" style="left:549px;width:108px">maa 14-1-19</div>
<div class="c" style="left:657px;width:31px"><svg class="ic" style="left:3px;top:5px" width="18" height="13" viewBox="0 0 18 13"><rect x="0" y="0.300" width="14" height="6" fill="#4a7fbe"/><path d="M8.500 8.200h6M12 5.200l3.200 3-3.200 3" fill="none" stroke="#fff" stroke-width="3.400"/><path d="M8.800 8.200h6M12 5.400l3 2.800-3 2.800" fill="none" stroke="#555" stroke-width="1.500"/></svg></div>
<div class="c" style="left:688px;width:45px">14;16</div>
<div class="c" style="left:733px;width:94px">133;135</div>
<div class="c" style="left:827px;width:45px">0%</div>
<div class="c" style="left:872px;width:150px;padding-right:3px"><div style="overflow:hidden;width:145px">Res_14M[50%]</div></div>
<div class="c" style="left:1022px;width:23px"></div>
</div>
<div class="r" style="top:315px;height:21px">
<div class="rn">16</div>
<div class="c" style="left:41px;width:52px ;border-left-color:#b4b4b4"><svg class="ic" style="left:3px;top:2px" width="14" height="12" viewBox="0 0 14 12"><rect x="0" y="0" width="14" height="12" fill="#44618f"/><rect x="0" y="0" width="14" height="2.600" fill="#5b80d6"/><rect x="1" y="1" width="12" height="1" fill="#8eaaf2"/>
<g fill="#fff"><rect x="1" y="3" width="2" height="2"/><rect x="4" y="3" width="2" height="2"/><rect x="7" y="3" width="2" height="2"/><rect x="10" y="3" width="3" height="2"/>
<rect x="1" y="6" width="2" height="2"/><rect x="4" y="6" width="2" height="2" fill="#b4c3dc"/><rect x="7" y="6" width="2" height="2"/>
<rect x="1" y="9" width="2" height="2"/><rect x="4" y="9" width="2" height="2"/><rect x="7" y="9" width="2" height="2"/><rect x="10" y="9" width="3" height="2"/></g>
<rect x="9.500" y="5.500" width="4" height="3" fill="#1d6c9c"/><rect x="10.300" y="6" width="2.400" height="2" fill="#45cdfb"/></svg></div>
<div class="c" style="left:93px;width:73px">135</div>
<div class="c" style="left:166px;width:31px"><div class="circ" style="background:#fff;border-color:#6a6a6a;left:3.6px;top:1.8px;width:14px;height:14px"></div></div>
<div class="c" style="left:197px;width:171px;padding-left:64.4px">tst6</div>
<div class="c" style="left:368px;width:73px"><div style="overflow:hidden;width:68px">3 dagen</div></div>
<div class="c" style="left:441px;width:108px">din 8-1-19</div>
<div class="c" style="left:549px;width:108px">don 10-1-19</div>
<div class="c" style="left:657px;width:31px"><svg class="ic" style="left:3px;top:5px" width="18" height="13" viewBox="0 0 18 13"><rect x="0" y="0.300" width="14" height="6" fill="#4a7fbe"/><path d="M8.500 8.200h6M12 5.200l3.200 3-3.200 3" fill="none" stroke="#fff" stroke-width="3.400"/><path d="M8.800 8.200h6M12 5.400l3 2.800-3 2.800" fill="none" stroke="#555" stroke-width="1.500"/></svg></div>
<div class="c" style="left:688px;width:45px"></div>
<div class="c" style="left:733px;width:94px"></div>
<div class="c" style="left:827px;width:45px">0%</div>
<div class="c" style="left:872px;width:150px;padding-right:3px"><div style="overflow:hidden;width:145px">Res_11M[33%]</div></div>
<div class="c" style="left:1022px;width:23px"></div>
</div>
<div class="r" style="top:336px;height:21px">
<div class="rn">17</div>
<div class="c" style="left:41px;width:52px ;border-left-color:#b4b4b4"><svg class="ic" style="left:3px;top:2px" width="14" height="12" viewBox="0 0 14 12"><rect x="0" y="0" width="14" height="12" fill="#44618f"/><rect x="0" y="0" width="14" height="2.600" fill="#5b80d6"/><rect x="1" y="1" width="12" height="1" fill="#8eaaf2"/>
<g fill="#fff"><rect x="1" y="3" width="2" height="2"/><rect x="4" y="3" width="2" height="2"/><rect x="7" y="3" width="2" height="2"/><rect x="10" y="3" width="3" height="2"/>
<rect x="1" y="6" width="2" height="2"/><rect x="4" y="6" width="2" height="2" fill="#b4c3dc"/><rect x="7" y="6" width="2" height="2"/>
<rect x="1" y="9" width="2" height="2"/><rect x="4" y="9" width="2" height="2"/><rect x="7" y="9" width="2" height="2"/><rect x="10" y="9" width="3" height="2"/></g>
<rect x="9.500" y="5.500" width="4" height="3" fill="#1d6c9c"/><rect x="10.300" y="6" width="2.400" height="2" fill="#45cdfb"/></svg><svg class="ic" style="left:22.1px;top:1px" width="12" height="14" viewBox="0 0 12 14"><circle cx="6" cy="3.800" r="3.100" fill="#b30000"/><path d="M1 13.400c-.3-3.400.8-5.600 3.200-6l1.800 2.600 1.800-2.600c2.400.4 3.500 2.600 3.200 6-2.800.8-7.200.8-10 0z" fill="#b30000"/></svg></div>
<div class="c" style="left:93px;width:73px">136</div>
<div class="c" style="left:166px;width:31px"><div class="circ" style="background:#fff;border-color:#6a6a6a;left:3.6px;top:1.8px;width:14px;height:14px"></div></div>
<div class="c" style="left:197px;width:171px;padding-left:64.4px">tst7</div>
<div class="c" style="left:368px;width:73px"><div style="overflow:hidden;width:68px">1 dag</div></div>
<div class="c" style="left:441px;width:108px">din 8-1-19</div>
<div class="c" style="left:549px;width:108px">din 8-1-19</div>
<div class="c" style="left:657px;width:31px"><svg class="ic" style="left:3px;top:5px" width="18" height="13" viewBox="0 0 18 13"><rect x="0" y="0.300" width="14" height="6" fill="#4a7fbe"/><path d="M8.500 8.200h6M12 5.200l3.200 3-3.200 3" fill="none" stroke="#fff" stroke-width="3.400"/><path d="M8.800 8.200h6M12 5.400l3 2.800-3 2.800" fill="none" stroke="#555" stroke-width="1.500"/></svg></div>
<div class="c" style="left:688px;width:45px"></div>
<div class="c" style="left:733px;width:94px"></div>
<div class="c" style="left:827px;width:45px">0%</div>
<div class="c" style="left:872px;width:150px;padding-right:3px"><div style="overflow:hidden;width:145px">Res_12M[40%]</div></div>
<div class="c" style="left:1022px;width:23px"></div>
</div>
<div class="r" style="top:357px;height:21px">
<div class="rn">18</div>
<div class="c" style="left:41px;width:52px ;border-left-color:#b4b4b4"><svg class="ic" style="left:3px;top:2px" width="14" height="12" viewBox="0 0 14 12"><rect x="0" y="0" width="14" height="12" fill="#44618f"/><rect x="0" y="0" width="14" height="2.600" fill="#5b80d6"/><rect x="1" y="1" width="12" height="1" fill="#8eaaf2"/>
<g fill="#fff"><rect x="1" y="3" width="2" height="2"/><rect x="4" y="3" width="2" height="2"/><rect x="7" y="3" width="2" height="2"/><rect x="10" y="3" width="3" height="2"/>
<rect x="1" y="6" width="2" height="2"/><rect x="4" y="6" width="2" height="2" fill="#b4c3dc"/><rect x="7" y="6" width="2" height="2"/>
<rect x="1" y="9" width="2" height="2"/><rect x="4" y="9" width="2" height="2"/><rect x="7" y="9" width="2" height="2"/><rect x="10" y="9" width="3" height="2"/></g>
<rect x="9.500" y="5.500" width="4" height="3" fill="#1d6c9c"/><rect x="10.300" y="6" width="2.400" height="2" fill="#45cdfb"/></svg></div>
<div class="c" style="left:93px;width:73px">137</div>
<div class="c" style="left:166px;width:31px"><div class="circ" style="background:#fff;border-color:#6a6a6a;left:3.6px;top:1.8px;width:14px;height:14px"></div></div>
<div class="c" style="left:197px;width:171px;padding-left:64.4px">tst8_aug</div>
<div class="c" style="left:368px;width:73px"><div style="overflow:hidden;width:68px">0,5 dagen</div></div>
<div class="c" style="left:441px;width:108px">din 8-1-19</div>
<div class="c" style="left:549px;width:108px">din 8-1-19</div>
<div class="c" style="left:657px;width:31px"><svg class="ic" style="left:3px;top:5px" width="18" height="13" viewBox="0 0 18 13"><rect x="0" y="0.300" width="14" height="6" fill="#4a7fbe"/><path d="M8.500 8.200h6M12 5.200l3.200 3-3.200 3" fill="none" stroke="#fff" stroke-width="3.400"/><path d="M8.800 8.200h6M12 5.400l3 2.800-3 2.800" fill="none" stroke="#555" stroke-width="1.500"/></svg></div>
<div class="c" style="left:688px;width:45px"></div>
<div class="c" style="left:733px;width:94px"></div>
<div class="c" style="left:827px;width:45px">0%</div>
<div class="c" style="left:872px;width:150px;padding-right:3px"><div style="overflow:hidden;width:145px">Res_13M[45%]</div></div>
<div class="c" style="left:1022px;width:23px"></div>
</div>
<div class="r" style="top:378px;height:21px">
<div class="rn">19</div>
<div class="c" style="left:41px;width:52px ;border-left-color:#b4b4b4"><svg class="ic" style="left:3px;top:2px" width="14" height="12" viewBox="0 0 14 12"><rect x="0" y="0" width="14" height="12" fill="#44618f"/><rect x="0" y="0" width="14" height="2.600" fill="#5b80d6"/><rect x="1" y="1" width="12" height="1" fill="#8eaaf2"/>
<g fill="#fff"><rect x="1" y="3" width="2" height="2"/><rect x="4" y="3" width="2" height="2"/><rect x="7" y="3" width="2" height="2"/><rect x="10" y="3" width="3" height="2"/>
<rect x="1" y="6" width="2" height="2"/><rect x="4" y="6" width="2" height="2" fill="#b4c3dc"/><rect x="7" y="6" width="2" height="2"/>
<rect x="1" y="9" width="2" height="2"/><rect x="4" y="9" width="2" height="2"/><rect x="7" y="9" width="2" height="2"/><rect x="10" y="9" width="3" height="2"/></g>
<rect x="9.500" y="5.500" width="4" height="3" fill="#1d6c9c"/><rect x="10.300" y="6" width="2.400" height="2" fill="#45cdfb"/></svg></div>
<div class="c" style="left:93px;width:73px">138</div>
<div class="c" style="left:166px;width:31px"><div class="circ" style="background:#fff;border-color:#6a6a6a;left:3.6px;top:1.8px;width:14px;height:14px"></div></div>
<div class="c" style="left:197px;width:171px;padding-left:64.4px">tst9</div>
<div class="c" style="left:368px;width:73px"><div style="overflow:hidden;width:68px">1,5 dagen</div></div>
<div class="c" style="left:441px;width:108px">din 8-1-19</div>
<div class="c" style="left:549px;width:108px">woe 9-1-19</div>
<div class="c" style="left:657px;width:31px"><svg class="ic" style="left:3px;top:5px" width="18" height="13" viewBox="0 0 18 13"><rect x="0" y="0.300" width="14" height="6" fill="#4a7fbe"/><path d="M8.500 8.200h6M12 5.200l3.200 3-3.200 3" fill="none" stroke="#fff" stroke-width="3.400"/><path d="M8.800 8.200h6M12 5.400l3 2.800-3 2.800" fill="none" stroke="#555" stroke-width="1.500"/></svg></div>
<div class="c" style="left:688px;width:45px"></div>
<div class="c" style="left:733px;width:94px"></div>
<div class="c" style="left:827px;width:45px">0%</div>
<div class="c" style="left:872px;width:150px;padding-right:3px"><div style="overflow:hidden;width:145px">Res_14M[50%]</div></div>
<div class="c" style="left:1022px;width:23px"></div>
</div>
<div class="r" style="top:399px;height:21px">
<div class="rn">20</div>
<div class="c" style="left:41px;width:52px ;border-left-color:#b4b4b4"><svg class="ic" style="left:3px;top:2px" width="14" height="12" viewBox="0 0 14 12"><rect x="0" y="0" width="14" height="12" fill="#44618f"/><rect x="0" y="0" width="14" height="2.600" fill="#5b80d6"/><rect x="1" y="1" width="12" height="1" fill="#8eaaf2"/>
<g fill="#fff"><rect x="1" y="3" width="2" height="2"/><rect x="4" y="3" width="2" height="2"/><rect x="7" y="3" width="2" height="2"/><rect x="10" y="3" width="3" height="2"/>
<rect x="1" y="6" width="2" height="2"/><rect x="4" y="6" width="2" height="2" fill="#b4c3dc"/><rect x="7" y="6" width="2" height="2"/>
<rect x="1" y="9" width="2" height="2"/><rect x="4" y="9" width="2" height="2"/><rect x="7" y="9" width="2" height="2"/><rect x="10" y="9" width="3" height="2"/></g>
<rect x="9.500" y="5.500" width="4" height="3" fill="#1d6c9c"/><rect x="10.300" y="6" width="2.400" height="2" fill="#45cdfb"/></svg><svg class="ic" style="left:22.1px;top:1px" width="12" height="14" viewBox="0 0 12 14"><circle cx="6" cy="3.800" r="3.100" fill="#b30000"/><path d="M1 13.400c-.3-3.400.8-5.600 3.200-6l1.800 2.600 1.800-2.600c2.400.4 3.500 2.600 3.200 6-2.800.8-7.200.8-10 0z" fill="#b30000"/></svg></div>
<div class="c" style="left:93px;width:73px">139</div>
<div class="c" style="left:166px;width:31px"><div class="circ" style="background:#fff;border-color:#6a6a6a;left:3.6px;top:1.8px;width:14px;height:14px"></div></div>
<div class="c" style="left:197px;width:171px;padding-left:64.4px">tst10</div>
<div class="c" style="left:368px;width:73px"><div style="overflow:hidden;width:68px">1,5 dagen</div></div>
<div class="c" style="left:441px;width:108px">din 8-1-19</div>
<div class="c" style="left:549px;width:108px">woe 9-1-19</div>
<div class="c" style="left:657px;width:31px"><svg class="ic" style="left:3px;top:5px" width="18" height="13" viewBox="0 0 18 13"><rect x="0" y="0.300" width="14" height="6" fill="#4a7fbe"/><path d="M8.500 8.200h6M12 5.200l3.200 3-3.200 3" fill="none" stroke="#fff" stroke-width="3.400"/><path d="M8.800 8.200h6M12 5.400l3 2.800-3 2.800" fill="none" stroke="#555" stroke-width="1.500"/></svg></div>
<div class="c" style="left:688px;width:45px">10</div>
<div class="c" style="left:733px;width:94px">141</div>
<div class="c" style="left:827px;width:45px">0%</div>
<div class="c" style="left:872px;width:150px;padding-right:3px"><div style="overflow:hidden;width:145px">Res_12M[40%]</div></div>
<div class="c" style="left:1022px;width:23px"></div>
</div>
<div class="r" style="top:420px;height:21px">
<div class="rn">21</div>
<div class="c" style="left:41px;width:52px ;border-left-color:#b4b4b4"><svg class="ic" style="left:3px;top:2px" width="14" height="12" viewBox="0 0 14 12"><rect x="0" y="0" width="14" height="12" fill="#44618f"/><rect x="0" y="0" width="14" height="2.600" fill="#5b80d6"/><rect x="1" y="1" width="12" height="1" fill="#8eaaf2"/>
<g fill="#fff"><rect x="1" y="3" width="2" height="2"/><rect x="4" y="3" width="2" height="2"/><rect x="7" y="3" width="2" height="2"/><rect x="10" y="3" width="3" height="2"/>
<rect x="1" y="6" width="2" height="2"/><rect x="4" y="6" width="2" height="2" fill="#b4c3dc"/><rect x="7" y="6" width="2" height="2"/>
<rect x="1" y="9" width="2" height="2"/><rect x="4" y="9" width="2" height="2"/><rect x="7" y="9" width="2" height="2"/><rect x="10" y="9" width="3" height="2"/></g>
<rect x="9.500" y="5.500" width="4" height="3" fill="#1d6c9c"/><rect x="10.300" y="6" width="2.400" height="2" fill="#45cdfb"/></svg></div>
<div class="c" style="left:93px;width:73px">142</div>
<div class="c" style="left:166px;width:31px"><div class="circ" style="background:#fff;border-color:#6a6a6a;left:3.6px;top:1.8px;width:14px;height:14px"></div></div>
<div class="c" style="left:197px;width:171px;padding-left:64.4px">tst11</div>
<div class="c" style="left:368px;width:73px"><div style="overflow:hidden;width:68px">2 dagen</div></div>
<div class="c" style="left:441px;width:108px">din 8-1-19</div>
<div class="c" style="left:549px;width:108px">woe 9-1-19</div>
<div class="c" style="left:657px;width:31px"><svg class="ic" style="left:3px;top:5px" width="18" height="13" viewBox="0 0 18 13"><rect x="0" y="0.300" width="14" height="6" fill="#4a7fbe"/><path d="M8.500 8.200h6M12 5.200l3.200 3-3.200 3" fill="none" stroke="#fff" stroke-width="3.400"/><path d="M8.800 8.200h6M12 5.400l3 2.800-3 2.800" fill="none" stroke="#555" stroke-width="1.500"/></svg></div>
<div class="c" style="left:688px;width:45px"></div>
<div class="c" style="left:733px;width:94px"></div>
<div class="c" style="left:827px;width:45px">0%</div>
<div class="c" style="left:872px;width:150px;padding-right:3px"><div style="overflow:hidden;width:145px">Res_11M[33%]</div></div>
<div class="c" style="left:1022px;width:23px"></div>
</div>
<div class="r b" style="top:441px;height:21px">
<div class="rn">22</div>
<div class="c" style="left:41px;width:52px ;border-left-color:#b4b4b4"></div>
<div class="c" style="left:93px;width:73px;letter-spacing:.1px">104</div>
<div class="c" style="left:166px;width:31px"></div>
<div class="c" style="left:197px;width:171px;padding-left:48.4px;letter-spacing:.43px"><svg class="ic" style="left:35.8px;top:5.4px" width="7" height="7" viewBox="0 0 7 7"><polygon points="5.900,0 5.900,5.700 0,5.700" fill="#3a3a3a"/></svg>Cycle 5</div>
<div class="c" style="left:368px;width:73px"><div style="overflow:hidden;width:68px">2696,3 dagen</div></div>
<div class="c" style="left:441px;width:108px">vri 12-7-19</div>
<div class="c" style="left:549px;width:108px">maa 12-11-29</div>
<div class="c" style="left:657px;width:31px"><svg class="ic" style="left:3px;top:5px" width="18" height="13" viewBox="0 0 18 13"><rect x="0" y="0.300" width="14" height="6" fill="#4a7fbe"/><path d="M8.500 8.200h6M12 5.200l3.200 3-3.200 3" fill="none" stroke="#fff" stroke-width="3.400"/><path d="M8.800 8.200h6M12 5.400l3 2.800-3 2.800" fill="none" stroke="#555" stroke-width="1.500"/></svg></div>
<div class="c" style="left:688px;width:45px"></div>
<div class="c" style="left:733px;width:94px"></div>
<div class="c" style="left:827px;width:45px;letter-spacing:0">77%</div>
<div class="c" style="left:872px;width:150px;padding-right:3px"></div>
<div class="c" style="left:1022px;width:23px"></div>
</div>
<div class="r" style="top:462px;height:21px">
<div class="rn">23</div>
<div class="c" style="left:41px;width:52px ;border-left-color:#b4b4b4"><svg class="ic" style="left:3px;top:2px" width="14" height="12" viewBox="0 0 14 12"><rect x="0" y="0" width="14" height="12" fill="#44618f"/><rect x="0" y="0" width="14" height="2.600" fill="#5b80d6"/><rect x="1" y="1" width="12" height="1" fill="#8eaaf2"/>
<g fill="#fff"><rect x="1" y="3" width="2" height="2"/><rect x="4" y="3" width="2" height="2"/><rect x="7" y="3" width="2" height="2"/><rect x="10" y="3" width="3" height="2"/>
<rect x="1" y="6" width="2" height="2"/><rect x="4" y="6" width="2" height="2" fill="#b4c3dc"/><rect x="7" y="6" width="2" height="2"/>
<rect x="1" y="9" width="2" height="2"/><rect x="4" y="9" width="2" height="2"/><rect x="7" y="9" width="2" height="2"/><rect x="10" y="9" width="3" height="2"/></g>
<rect x="9.500" y="5.500" width="4" height="3" fill="#1d6c9c"/><rect x="10.300" y="6" width="2.400" height="2" fill="#45cdfb"/></svg></div>
<div class="c" style="left:93px;width:73px">129</div>
<div class="c" style="left:166px;width:31px"><div class="circ" style="background:#fff;border-color:#6a6a6a;left:3.6px;top:1.8px;width:14px;height:14px"></div></div>
<div class="c" style="left:197px;width:171px;padding-left:64.4px">Action3.M</div>
<div class="c" style="left:368px;width:73px"><div style="overflow:hidden;width:68px">0,3 dagen</div></div>
<div class="c" style="left:441px;width:108px">maa 12-11-29</div>
<div class="c" style="left:549px;width:108px">maa 12-11-29</div>
<div class="c" style="left:657px;width:31px"><svg class="ic" style="left:3px;top:5px" width="18" height="13" viewBox="0 0 18 13"><rect x="0" y="0.300" width="14" height="6" fill="#4a7fbe"/><path d="M8.500 8.200h6M12 5.200l3.200 3-3.200 3" fill="none" stroke="#fff" stroke-width="3.400"/><path d="M8.800 8.200h6M12 5.400l3 2.800-3 2.800" fill="none" stroke="#555" stroke-width="1.500"/></svg></div>
<div class="c" style="left:688px;width:45px"></div>
<div class="c" style="left:733px;width:94px"></div>
<div class="c" style="left:827px;width:45px">0%</div>
<div class="c" style="left:872px;width:150px;padding-right:3px"></div>
<div class="c" style="left:1022px;width:23px"></div>
</div>
<div class="r" style="top:483px;height:21px">
<div class="rn">24</div>
<div class="c" style="left:41px;width:52px ;border-left-color:#b4b4b4"><svg class="ic" style="left:2px;top:2px" width="16" height="14" viewBox="0 0 16 14"><path d="M1.300 7.400l4 4.200L14.200 1.500" fill="none" stroke="#4b6db3" stroke-width="2.800"/></svg></div>
<div class="c" style="left:93px;width:73px">105</div>
<div class="c" style="left:166px;width:31px"><div class="circ" style="background:#5fa78b;border-color:#4c8a72"></div></div>
<div class="c" style="left:197px;width:171px;padding-left:64.4px">Activiteit C.M</div>
<div class="c" style="left:368px;width:73px"><div style="overflow:hidden;width:68px">1 dag</div></div>
<div class="c" style="left:441px;width:108px">vri 12-7-19</div>
<div class="c" style="left:549px;width:108px">vri 12-7-19</div>
<div class="c" style="left:657px;width:31px"><svg class="ic" style="left:3px;top:5px" width="18" height="13" viewBox="0 0 18 13"><rect x="0" y="0.300" width="14" height="6" fill="#4a7fbe"/><path d="M8.500 8.200h6M12 5.200l3.200 3-3.200 3" fill="none" stroke="#fff" stroke-width="3.400"/><path d="M8.800 8.200h6M12 5.400l3 2.800-3 2.800" fill="none" stroke="#555" stroke-width="1.500"/></svg></div>
<div class="c" style="left:688px;width:45px"></div>
<div class="c" style="left:733px;width:94px"></div>
<div class="c" style="left:827px;width:45px">100%</div>
<div class="c" style="left:872px;width:150px;padding-right:3px"></div>
<div class="c" style="left:1022px;width:23px">Not started</div>
</div>
<div class="r b" style="top:504px;height:21px">
<div class="rn">25</div>
<div class="c" style="left:41px;width:52px ;border-left-color:#b4b4b4"></div>
<div class="c" style="left:93px;width:73px;letter-spacing:.1px">106</div>
<div class="c" style="left:166px;width:31px"></div>
<div class="c" style="left:197px;width:171px;padding-left:48.4px;letter-spacing:.43px"><svg class="ic" style="left:35.8px;top:5.4px" width="7" height="7" viewBox="0 0 7 7"><polygon points="5.900,0 5.900,5.700 0,5.700" fill="#3a3a3a"/></svg>Cycle 6</div>
<div class="c" style="left:368px;width:73px"><div style="overflow:hidden;width:68px">0 dagen</div></div>
<div class="c" style="left:441px;width:108px">don 14-11-19</div>
<div class="c" style="left:549px;width:108px">don 14-11-19</div>
<div class="c" style="left:657px;width:31px"><svg class="ic" style="left:3px;top:5px" width="18" height="13" viewBox="0 0 18 13"><rect x="0" y="0.300" width="14" height="6" fill="#4a7fbe"/><path d="M8.500 8.200h6M12 5.200l3.200 3-3.200 3" fill="none" stroke="#fff" stroke-width="3.400"/><path d="M8.800 8.200h6M12 5.400l3 2.800-3 2.800" fill="none" stroke="#555" stroke-width="1.500"/></svg></div>
<div class="c" style="left:688px;width:45px"></div>
<div class="c" style="left:733px;width:94px"></div>
<div class="c" style="left:827px;width:45px;letter-spacing:0">0%</div>
<div class="c" style="left:872px;width:150px;padding-right:3px"></div>
<div class="c" style="left:1022px;width:23px"></div>
</div>
<div class="r" style="top:525px;height:21px">
<div class="rn">26</div>
<div class="c" style="left:41px;width:52px ;border-left-color:#b4b4b4"><svg class="ic" style="left:3px;top:2px" width="14" height="12" viewBox="0 0 14 12"><rect x="0" y="0" width="14" height="12" fill="#44618f"/><rect x="0" y="0" width="14" height="2.600" fill="#5b80d6"/><rect x="1" y="1" width="12" height="1" fill="#8eaaf2"/>
<g fill="#fff"><rect x="1" y="3" width="2" height="2"/><rect x="4" y="3" width="2" height="2"/><rect x="7" y="3" width="2" height="2"/><rect x="10" y="3" width="3" height="2"/>
<rect x="1" y="6" width="2" height="2"/><rect x="4" y="6" width="2" height="2" fill="#b4c3dc"/><rect x="7" y="6" width="2" height="2"/>
<rect x="1" y="9" width="2" height="2"/><rect x="4" y="9" width="2" height="2"/><rect x="7" y="9" width="2" height="2"/><rect x="10" y="9" width="3" height="2"/></g>
<rect x="9.500" y="5.500" width="4" height="3" fill="#1d6c9c"/><rect x="10.300" y="6" width="2.400" height="2" fill="#45cdfb"/></svg></div>
<div class="c" style="left:93px;width:73px">107</div>
<div class="c" style="left:166px;width:31px"><div class="circ" style="background:#fff;border-color:#6a6a6a;left:3.6px;top:1.8px;width:14px;height:14px"></div></div>
<div class="c" style="left:197px;width:171px;padding-left:64.4px">End of Project</div>
<div class="c" style="left:368px;width:73px"><div style="overflow:hidden;width:68px">0 dagen</div></div>
<div class="c" style="left:441px;width:108px">don 14-11-19</div>
<div class="c" style="left:549px;width:108px">don 14-11-19</div>
<div class="c" style="left:657px;width:31px"><svg class="ic" style="left:3px;top:5px" width="18" height="13" viewBox="0 0 18 13"><rect x="0" y="0.300" width="14" height="6" fill="#4a7fbe"/><path d="M8.500 8.200h6M12 5.200l3.200 3-3.200 3" fill="none" stroke="#fff" stroke-width="3.400"/><path d="M8.800 8.200h6M12 5.400l3 2.800-3 2.800" fill="none" stroke="#555" stroke-width="1.500"/></svg></div>
<div class="c" style="left:688px;width:45px"></div>
<div class="c" style="left:733px;width:94px"></div>
<div class="c" style="left:827px;width:45px">0%</div>
<div class="c" style="left:872px;width:150px;padding-right:3px"></div>
<div class="c" style="left:1022px;width:23px"></div>
</div>
<div class="r b" style="top:546px;height:21px">
<div class="rn">27</div>
<div class="c" style="left:41px;width:52px ;border-left-color:#b4b4b4"></div>
<div class="c" style="left:93px;width:73px;letter-spacing:.1px">108</div>
<div class="c" style="left:166px;width:31px"></div>
<div class="c" style="left:197px;width:171px;padding-left:32.4px;letter-spacing:.43px"><svg class="ic" style="left:19.8px;top:5.4px" width="7" height="7" viewBox="0 0 7 7"><polygon points="5.900,0 5.900,5.700 0,5.700" fill="#3a3a3a"/></svg>Business Intelligence</div>
<div class="c" style="left:368px;width:73px"><div style="overflow:hidden;width:68px">154,5 dagen</div></div>
<div class="c" style="left:441px;width:108px">maa 21-1-19</div>
<div class="c" style="left:549px;width:108px">vri 23-8-19</div>
<div class="c" style="left:657px;width:31px"><svg class="ic" style="left:3px;top:5px" width="18" height="13" viewBox="0 0 18 13"><rect x="0" y="0.300" width="14" height="6" fill="#4a7fbe"/><path d="M8.500 8.200h6M12 5.200l3.200 3-3.200 3" fill="none" stroke="#fff" stroke-width="3.400"/><path d="M8.800 8.200h6M12 5.400l3 2.800-3 2.800" fill="none" stroke="#555" stroke-width="1.500"/></svg></div>
<div class="c" style="left:688px;width:45px"></div>
<div class="c" style="left:733px;width:94px"></div>
<div class="c" style="left:827px;width:45px;letter-spacing:0">15%</div>
<div class="c" style="left:872px;width:150px;padding-right:3px"></div>
<div class="c" style="left:1022px;width:23px"></div>
</div>
<div class="r b" style="top:567px;height:21px">
<div class="rn">28</div>
<div class="c" style="left:41px;width:52px ;border-left-color:#b4b4b4"></div>
<div class="c" style="left:93px;width:73px;letter-spacing:.1px">109</div>
<div class="c" style="left:166px;width:31px"></div>
<div class="c" style="left:197px;width:171px;padding-left:48.4px;letter-spacing:.43px"><svg class="ic" style="left:35.8px;top:5.4px" width="7" height="7" viewBox="0 0 7 7"><polygon points="5.900,0 5.900,5.700 0,5.700" fill="#3a3a3a"/></svg>Cycle 4</div>
<div class="c" style="left:368px;width:73px"><div style="overflow:hidden;width:68px">154,5 dagen</div></div>
<div class="c" style="left:441px;width:108px">maa 21-1-19</div>
<div class="c" style="left:549px;width:108px">vri 23-8-19</div>
<div class="c" style="left:657px;width:31px"><svg class="ic" style="left:3px;top:5px" width="18" height="13" viewBox="0 0 18 13"><rect x="0" y="0.300" width="14" height="6" fill="#4a7fbe"/><path d="M8.500 8.200h6M12 5.200l3.200 3-3.200 3" fill="none" stroke="#fff" stroke-width="3.400"/><path d="M8.800 8.200h6M12 5.400l3 2.800-3 2.800" fill="none" stroke="#555" stroke-width="1.500"/></svg></div>
<div class="c" style="left:688px;width:45px"></div>
<div class="c" style="left:733px;width:94px"></div>
<div class="c" style="left:827px;width:45px;letter-spacing:0">15%</div>
<div class="c" style="left:872px;width:150px;padding-right:3px"></div>
<div class="c" style="left:1022px;width:23px"></div>
</div>
<div class="r" style="top:588px;height:53px">
<div class="rn">29</div>
<div class="c" style="left:41px;width:52px ;border-left-color:#b4b4b4"><svg class="ic" style="left:3px;top:2px" width="14" height="12" viewBox="0 0 14 12"><rect x="0" y="0" width="14" height="12" fill="#44618f"/><rect x="0" y="0" width="14" height="2.600" fill="#5b80d6"/><rect x="1" y="1" width="12" height="1" fill="#8eaaf2"/>
<g fill="#fff"><rect x="1" y="3" width="2" height="2"/><rect x="4" y="3" width="2" height="2"/><rect x="7" y="3" width="2" height="2"/><rect x="10" y="3" width="3" height="2"/>
<rect x="1" y="6" width="2" height="2"/><rect x="4" y="6" width="2" height="2" fill="#b4c3dc"/><rect x="7" y="6" width="2" height="2"/>
<rect x="1" y="9" width="2" height="2"/><rect x="4" y="9" width="2" height="2"/><rect x="7" y="9" width="2" height="2"/><rect x="10" y="9" width="3" height="2"/></g>
<rect x="9.500" y="5.500" width="4" height="3" fill="#1d6c9c"/><rect x="10.300" y="6" width="2.400" height="2" fill="#45cdfb"/></svg></div>
<div class="c" style="left:93px;width:73px">110</div>
<div class="c" style="left:166px;width:31px"><div class="circ" style="background:#fff;border-color:#6a6a6a;left:3.6px;top:1.8px;width:14px;height:14px"></div></div>
<div class="c w" style="left:197px;width:171px;padding-left:64.4px;padding-right:2px">Del. Aa, aangevult<br>met . . . en nog veel<br>meer</div>
<div class="c" style="left:368px;width:73px"><div style="overflow:hidden;width:68px">10 dagen</div></div>
<div class="c" style="left:441px;width:108px">vri 9-8-19</div>
<div class="c" style="left:549px;width:108px">vri 23-8-19</div>
<div class="c" style="left:657px;width:31px"><svg class="ic" style="left:3px;top:5px" width="18" height="13" viewBox="0 0 18 13"><rect x="0" y="0.300" width="14" height="6" fill="#4a7fbe"/><path d="M8.500 8.200h6M12 5.200l3.200 3-3.200 3" fill="none" stroke="#fff" stroke-width="3.400"/><path d="M8.800 8.200h6M12 5.400l3 2.800-3 2.800" fill="none" stroke="#555" stroke-width="1.500"/></svg></div>
<div class="c" style="left:688px;width:45px">30</div>
<div class="c" style="left:733px;width:94px">111</div>
<div class="c" style="left:827px;width:45px">0%</div>
<div class="c w" style="left:872px;width:150px"><div style="overflow:hidden;width:145px">Res_20M;Res_21M;<br>Res_22M[45%]</div></div>
<div class="c" style="left:1022px;width:23px"></div>
</div>
<div class="r" style="top:641px;height:21px">
<div class="rn">30</div>
<div class="c" style="left:41px;width:52px ;border-left-color:#b4b4b4"><svg class="ic" style="left:3px;top:2px" width="14" height="12" viewBox="0 0 14 12"><rect x="0" y="0" width="14" height="12" fill="#44618f"/><rect x="0" y="0" width="14" height="2.600" fill="#5b80d6"/><rect x="1" y="1" width="12" height="1" fill="#8eaaf2"/>
<g fill="#fff"><rect x="1" y="3" width="2" height="2"/><rect x="4" y="3" width="2" height="2"/><rect x="7" y="3" width="2" height="2"/><rect x="10" y="3" width="3" height="2"/>
<rect x="1" y="6" width="2" height="2"/><rect x="4" y="6" width="2" height="2" fill="#b4c3dc"/><rect x="7" y="6" width="2" height="2"/>
<rect x="1" y="9" width="2" height="2"/><rect x="4" y="9" width="2" height="2"/><rect x="7" y="9" width="2" height="2"/><rect x="10" y="9" width="3" height="2"/></g>
<rect x="9.500" y="5.500" width="4" height="3" fill="#1d6c9c"/><rect x="10.300" y="6" width="2.400" height="2" fill="#45cdfb"/></svg></div>
<div class="c" style="left:93px;width:73px">111</div>
<div class="c" style="left:166px;width:31px"><div class="circ" style="background:#e0694a;border-color:#8a4a3a"></div></div>
<div class="c" style="left:197px;width:171px;padding-left:64.4px">Del. Bb</div>
<div class="c" style="left:368px;width:73px"><div style="overflow:hidden;width:68px">5,5 dagen</div></div>
<div class="c" style="left:441px;width:108px">vri 2-8-19</div>
<div class="c" style="left:549px;width:108px">vri 9-8-19</div>
<div class="c" style="left:657px;width:31px"><svg class="ic" style="left:3px;top:5px" width="18" height="13" viewBox="0 0 18 13"><rect x="0" y="0.300" width="14" height="6" fill="#4a7fbe"/><path d="M8.500 8.200h6M12 5.200l3.200 3-3.200 3" fill="none" stroke="#fff" stroke-width="3.400"/><path d="M8.800 8.200h6M12 5.400l3 2.800-3 2.800" fill="none" stroke="#555" stroke-width="1.500"/></svg></div>
<div class="c" style="left:688px;width:45px"></div>
<div class="c" style="left:733px;width:94px"></div>
<div class="c" style="left:827px;width:45px">30%</div>
<div class="c" style="left:872px;width:150px;padding-right:3px"><div style="overflow:hidden;width:145px">Res_20M;Res_21M;Res_22M</div></div>
<div class="c" style="left:1022px;width:23px"></div>
</div>
<div class="r" style="top:662px;height:21px">
<div class="rn">31</div>
<div class="c" style="left:41px;width:52px ;border-left-color:#b4b4b4"><svg class="ic" style="left:3px;top:2px" width="14" height="12" viewBox="0 0 14 12"><rect x="0" y="0" width="14" height="12" fill="#44618f"/><rect x="0" y="0" width="14" height="2.600" fill="#5b80d6"/><rect x="1" y="1" width="12" height="1" fill="#8eaaf2"/>
<g fill="#fff"><rect x="1" y="3" width="2" height="2"/><rect x="4" y="3" width="2" height="2"/><rect x="7" y="3" width="2" height="2"/><rect x="10" y="3" width="3" height="2"/>
<rect x="1" y="6" width="2" height="2"/><rect x="4" y="6" width="2" height="2" fill="#b4c3dc"/><rect x="7" y="6" width="2" height="2"/>
<rect x="1" y="9" width="2" height="2"/><rect x="4" y="9" width="2" height="2"/><rect x="7" y="9" width="2" height="2"/><rect x="10" y="9" width="3" height="2"/></g>
<rect x="9.500" y="5.500" width="4" height="3" fill="#1d6c9c"/><rect x="10.300" y="6" width="2.400" height="2" fill="#45cdfb"/></svg></div>
<div class="c" style="left:93px;width:73px">112</div>
<div class="c" style="left:166px;width:31px"><div class="circ" style="background:#e0694a;border-color:#8a4a3a"></div></div>
<div class="c" style="left:197px;width:171px;padding-left:64.4px">Del. Cc_aug</div>
<div class="c" style="left:368px;width:73px"><div style="overflow:hidden;width:68px">12 dagen</div></div>
<div class="c" style="left:441px;width:108px">maa 21-1-19</div>
<div class="c" style="left:549px;width:108px">din 5-2-19</div>
<div class="c" style="left:657px;width:31px"><svg class="ic" style="left:3px;top:5px" width="18" height="13" viewBox="0 0 18 13"><rect x="0" y="0.300" width="14" height="6" fill="#4a7fbe"/><path d="M8.500 8.200h6M12 5.200l3.200 3-3.200 3" fill="none" stroke="#fff" stroke-width="3.400"/><path d="M8.800 8.200h6M12 5.400l3 2.800-3 2.800" fill="none" stroke="#555" stroke-width="1.500"/></svg></div>
<div class="c" style="left:688px;width:45px"></div>
<div class="c" style="left:733px;width:94px"></div>
<div class="c" style="left:827px;width:45px">20%</div>
<div class="c" style="left:872px;width:150px;padding-right:3px"><div style="overflow:hidden;width:145px">Res_20M;Res_21M;Res_22M[45%]</div></div>
<div class="c" style="left:1022px;width:23px"></div>
</div>
<div class="r b" style="top:683px;height:21px">
<div class="rn">32</div>
<div class="c" style="left:41px;width:52px ;border-left-color:#b4b4b4"><svg class="ic" style="left:3px;top:2px" width="14" height="12" viewBox="0 0 14 12"><rect x="0" y="0" width="14" height="12" fill="#44618f"/><rect x="0" y="0" width="14" height="2.600" fill="#5b80d6"/><rect x="1" y="1" width="12" height="1" fill="#8eaaf2"/>
<g fill="#fff"><rect x="1" y="3" width="2" height="2"/><rect x="4" y="3" width="2" height="2"/><rect x="7" y="3" width="2" height="2"/><rect x="10" y="3" width="3" height="2"/>
<rect x="1" y="6" width="2" height="2"/><rect x="4" y="6" width="2" height="2" fill="#b4c3dc"/><rect x="7" y="6" width="2" height="2"/>
<rect x="1" y="9" width="2" height="2"/><rect x="4" y="9" width="2" height="2"/><rect x="7" y="9" width="2" height="2"/><rect x="10" y="9" width="3" height="2"/></g>
<rect x="9.500" y="5.500" width="4" height="3" fill="#1d6c9c"/><rect x="10.300" y="6" width="2.400" height="2" fill="#45cdfb"/></svg></div>
<div class="c" style="left:93px;width:73px;letter-spacing:.1px">113</div>
<div class="c" style="left:166px;width:31px"><div class="circ" style="background:#fff;border-color:#6a6a6a;left:3.6px;top:1.8px;width:14px;height:14px"></div></div>
<div class="c" style="left:197px;width:171px;padding-left:48.4px;letter-spacing:.43px">Cycle 5</div>
<div class="c" style="left:368px;width:73px"><div style="overflow:hidden;width:68px">0 dagen</div></div>
<div class="c" style="left:441px;width:108px">zon 12-5-19</div>
<div class="c" style="left:549px;width:108px">zon 12-5-19</div>
<div class="c" style="left:657px;width:31px"><svg class="ic" style="left:3px;top:5px" width="18" height="13" viewBox="0 0 18 13"><rect x="0" y="0.300" width="14" height="6" fill="#4a7fbe"/><path d="M8.500 8.200h6M12 5.200l3.200 3-3.200 3" fill="none" stroke="#fff" stroke-width="3.400"/><path d="M8.800 8.200h6M12 5.400l3 2.800-3 2.800" fill="none" stroke="#555" stroke-width="1.500"/></svg></div>
<div class="c" style="left:688px;width:45px"></div>
<div class="c" style="left:733px;width:94px"></div>
<div class="c" style="left:827px;width:45px;letter-spacing:0">0%</div>
<div class="c" style="left:872px;width:150px;padding-right:3px"></div>
<div class="c" style="left:1022px;width:23px"></div>
</div>
<div class="r b" style="top:704px;height:21px">
<div class="rn">33</div>
<div class="c" style="left:41px;width:52px ;border-left-color:#b4b4b4"></div>
<div class="c" style="left:93px;width:73px;letter-spacing:.1px">114</div>
<div class="c" style="left:166px;width:31px"></div>
<div class="c" style="left:197px;width:171px;padding-left:32.4px;letter-spacing:.43px"><svg class="ic" style="left:19.8px;top:5.4px" width="7" height="7" viewBox="0 0 7 7"><polygon points="5.900,0 5.900,5.700 0,5.700" fill="#3a3a3a"/></svg>Finance and Controlling</div>
<div class="c" style="left:368px;width:73px"><div style="overflow:hidden;width:68px">101 dagen</div></div>
<div class="c" style="left:441px;width:108px">din 22-1-19</div>
<div class="c" style="left:549px;width:108px">woe 12-6-19</div>
<div class="c" style="left:657px;width:31px"><svg class="ic" style="left:3px;top:5px" width="18" height="13" viewBox="0 0 18 13"><rect x="0" y="0.300" width="14" height="6" fill="#4a7fbe"/><path d="M8.500 8.200h6M12 5.200l3.200 3-3.200 3" fill="none" stroke="#fff" stroke-width="3.400"/><path d="M8.800 8.200h6M12 5.400l3 2.800-3 2.800" fill="none" stroke="#555" stroke-width="1.500"/></svg></div>
<div class="c" style="left:688px;width:45px"></div>
<div class="c" style="left:733px;width:94px"></div>
<div class="c" style="left:827px;width:45px;letter-spacing:0">40%</div>
<div class="c" style="left:872px;width:150px;padding-right:3px"></div>
<div class="c" style="left:1022px;width:23px"></div>
</div>
<div class="r b" style="top:725px;height:21px">
<div class="rn">34</div>
<div class="c" style="left:41px;width:52px ;border-left-color:#b4b4b4"></div>
<div class="c" style="left:93px;width:73px;letter-spacing:.1px">115</div>
<div class="c" style="left:166px;width:31px"></div>
<div class="c" style="left:197px;width:171px;padding-left:48.4px;letter-spacing:.43px"><svg class="ic" style="left:35.8px;top:5.4px" width="7" height="7" viewBox="0 0 7 7"><polygon points="5.900,0 5.900,5.700 0,5.700" fill="#3a3a3a"/></svg>Cycle 4</div>
<div class="c" style="left:368px;width:73px"><div style="overflow:hidden;width:68px">0,2 dagen</div></div>
<div class="c" style="left:441px;width:108px">din 22-1-19</div>
<div class="c" style="left:549px;width:108px">din 22-1-19</div>
<div class="c" style="left:657px;width:31px"><svg class="ic" style="left:3px;top:5px" width="18" height="13" viewBox="0 0 18 13"><rect x="0" y="0.300" width="14" height="6" fill="#4a7fbe"/><path d="M8.500 8.200h6M12 5.200l3.200 3-3.200 3" fill="none" stroke="#fff" stroke-width="3.400"/><path d="M8.800 8.200h6M12 5.400l3 2.800-3 2.800" fill="none" stroke="#555" stroke-width="1.500"/></svg></div>
<div class="c" style="left:688px;width:45px"></div>
<div class="c" style="left:733px;width:94px"></div>
<div class="c" style="left:827px;width:45px;letter-spacing:0">40%</div>
<div class="c" style="left:872px;width:150px;padding-right:3px"></div>
<div class="c" style="left:1022px;width:23px"></div>
</div>
<div class="r" style="top:746px;height:21px">
<div class="rn">35</div>
<div class="c" style="left:41px;width:52px ;border-left-color:#b4b4b4"><svg class="ic" style="left:3px;top:2px" width="14" height="12" viewBox="0 0 14 12"><rect x="0" y="0" width="14" height="12" fill="#44618f"/><rect x="0" y="0" width="14" height="2.600" fill="#5b80d6"/><rect x="1" y="1" width="12" height="1" fill="#8eaaf2"/>
<g fill="#fff"><rect x="1" y="3" width="2" height="2"/><rect x="4" y="3" width="2" height="2"/><rect x="7" y="3" width="2" height="2"/><rect x="10" y="3" width="3" height="2"/>
<rect x="1" y="6" width="2" height="2"/><rect x="4" y="6" width="2" height="2" fill="#b4c3dc"/><rect x="7" y="6" width="2" height="2"/>
<rect x="1" y="9" width="2" height="2"/><rect x="4" y="9" width="2" height="2"/><rect x="7" y="9" width="2" height="2"/><rect x="10" y="9" width="3" height="2"/></g>
<rect x="9.500" y="5.500" width="4" height="3" fill="#1d6c9c"/><rect x="10.300" y="6" width="2.400" height="2" fill="#45cdfb"/></svg></div>
<div class="c" style="left:93px;width:73px">116</div>
<div class="c" style="left:166px;width:31px"><div class="circ" style="background:#f0c47a;border-color:#a08850"></div></div>
<div class="c" style="left:197px;width:171px;padding-left:64.4px">Del. Dd</div>
<div class="c" style="left:368px;width:73px"><div style="overflow:hidden;width:68px">0,1 dagen</div></div>
<div class="c" style="left:441px;width:108px">din 22-1-19</div>
<div class="c" style="left:549px;width:108px">din 22-1-19</div>
<div class="c" style="left:657px;width:31px"><svg class="ic" style="left:3px;top:5px" width="18" height="13" viewBox="0 0 18 13"><rect x="0" y="0.300" width="14" height="6" fill="#4a7fbe"/><path d="M8.500 8.200h6M12 5.200l3.200 3-3.200 3" fill="none" stroke="#fff" stroke-width="3.400"/><path d="M8.800 8.200h6M12 5.400l3 2.800-3 2.800" fill="none" stroke="#555" stroke-width="1.500"/></svg></div>
<div class="c" style="left:688px;width:45px">36</div>
<div class="c" style="left:733px;width:94px">117</div>
<div class="c" style="left:827px;width:45px">90%</div>
<div class="c" style="left:872px;width:150px;padding-right:3px"><div style="overflow:hidden;width:145px">Res_23M;Res_24M;Res_25M;Res_26M</div></div>
<div class="c" style="left:1022px;width:23px"></div>
</div>
<div class="r" style="top:767px;height:21px">
<div class="rn">36</div>
<div class="c" style="left:41px;width:52px ;border-left-color:#b4b4b4"><svg class="ic" style="left:3px;top:2px" width="14" height="12" viewBox="0 0 14 12"><rect x="0" y="0" width="14" height="12" fill="#44618f"/><rect x="0" y="0" width="14" height="2.600" fill="#5b80d6"/><rect x="1" y="1" width="12" height="1" fill="#8eaaf2"/>
<g fill="#fff"><rect x="1" y="3" width="2" height="2"/><rect x="4" y="3" width="2" height="2"/><rect x="7" y="3" width="2" height="2"/><rect x="10" y="3" width="3" height="2"/>
<rect x="1" y="6" width="2" height="2"/><rect x="4" y="6" width="2" height="2" fill="#b4c3dc"/><rect x="7" y="6" width="2" height="2"/>
<rect x="1" y="9" width="2" height="2"/><rect x="4" y="9" width="2" height="2"/><rect x="7" y="9" width="2" height="2"/><rect x="10" y="9" width="3" height="2"/></g>
<rect x="9.500" y="5.500" width="4" height="3" fill="#1d6c9c"/><rect x="10.300" y="6" width="2.400" height="2" fill="#45cdfb"/></svg></div>
<div class="c" style="left:93px;width:73px">117</div>
<div class="c" style="left:166px;width:31px"><div class="circ" style="background:#e0694a;border-color:#8a4a3a"></div></div>
<div class="c" style="left:197px;width:171px;padding-left:64.4px">Del. Ee</div>
<div class="c" style="left:368px;width:73px"><div style="overflow:hidden;width:68px">0,1 dagen</div></div>
<div class="c" style="left:441px;width:108px">din 22-1-19</div>
<div class="c" style="left:549px;width:108px">din 22-1-19</div>
<div class="c" style="left:657px;width:31px"><svg class="ic" style="left:3px;top:5px" width="18" height="13" viewBox="0 0 18 13"><rect x="0" y="0.300" width="14" height="6" fill="#4a7fbe"/><path d="M8.500 8.200h6M12 5.200l3.200 3-3.200 3" fill="none" stroke="#fff" stroke-width="3.400"/><path d="M8.800 8.200h6M12 5.400l3 2.800-3 2.800" fill="none" stroke="#555" stroke-width="1.500"/></svg></div>
<div class="c" style="left:688px;width:45px"></div>
<div class="c" style="left:733px;width:94px"></div>
<div class="c" style="left:827px;width:45px">20%</div>
<div class="c" style="left:872px;width:150px;padding-right:3px"><div style="overflow:hidden;width:145px">Res_23M;Res_24M;Res_25M;Res_26M</div></div>
<div class="c" style="left:1022px;width:23px"></div>
</div>
<div class="r" style="top:788px;height:21px">
<div class="rn">37</div>
<div class="c" style="left:41px;width:52px ;border-left-color:#b4b4b4"><svg class="ic" style="left:3px;top:2px" width="14" height="12" viewBox="0 0 14 12"><rect x="0" y="0" width="14" height="12" fill="#44618f"/><rect x="0" y="0" width="14" height="2.600" fill="#5b80d6"/><rect x="1" y="1" width="12" height="1" fill="#8eaaf2"/>
<g fill="#fff"><rect x="1" y="3" width="2" height="2"/><rect x="4" y="3" width="2" height="2"/><rect x="7" y="3" width="2" height="2"/><rect x="10" y="3" width="3" height="2"/>
<rect x="1" y="6" width="2" height="2"/><rect x="4" y="6" width="2" height="2" fill="#b4c3dc"/><rect x="7" y="6" width="2" height="2"/>
<rect x="1" y="9" width="2" height="2"/><rect x="4" y="9" width="2" height="2"/><rect x="7" y="9" width="2" height="2"/><rect x="10" y="9" width="3" height="2"/></g>
<rect x="9.500" y="5.500" width="4" height="3" fill="#1d6c9c"/><rect x="10.300" y="6" width="2.400" height="2" fill="#45cdfb"/></svg></div>
<div class="c" style="left:93px;width:73px">118</div>
<div class="c" style="left:166px;width:31px"><div class="circ" style="background:#e0694a;border-color:#8a4a3a"></div></div>
<div class="c" style="left:197px;width:171px;padding-left:64.4px">Del. Ff_aug</div>
<div class="c" style="left:368px;width:73px"><div style="overflow:hidden;width:68px">0,1 dagen</div></div>
<div class="c" style="left:441px;width:108px">din 22-1-19</div>
<div class="c" style="left:549px;width:108px">din 22-1-19</div>
<div class="c" style="left:657px;width:31px"><svg class="ic" style="left:3px;top:5px" width="18" height="13" viewBox="0 0 18 13"><rect x="0" y="0.300" width="14" height="6" fill="#4a7fbe"/><path d="M8.500 8.200h6M12 5.200l3.200 3-3.200 3" fill="none" stroke="#fff" stroke-width="3.400"/><path d="M8.800 8.200h6M12 5.400l3 2.800-3 2.800" fill="none" stroke="#555" stroke-width="1.500"/></svg></div>
<div class="c" style="left:688px;width:45px"></div>
<div class="c" style="left:733px;width:94px"></div>
<div class="c" style="left:827px;width:45px">10%</div>
<div class="c" style="left:872px;width:150px;padding-right:3px"><div style="overflow:hidden;width:145px">Res_23M;Res_24M;Res_25M;Res_26M</div></div>
<div class="c" style="left:1022px;width:23px"></div>
</div>
<div class="r b" style="top:809px;height:21px">
<div class="rn">38</div>
<div class="c" style="left:41px;width:52px ;border-left-color:#b4b4b4"><svg class="ic" style="left:3px;top:2px" width="14" height="12" viewBox="0 0 14 12"><rect x="0" y="0" width="14" height="12" fill="#44618f"/><rect x="0" y="0" width="14" height="2.600" fill="#5b80d6"/><rect x="1" y="1" width="12" height="1" fill="#8eaaf2"/>
<g fill="#fff"><rect x="1" y="3" width="2" height="2"/><rect x="4" y="3" width="2" height="2"/><rect x="7" y="3" width="2" height="2"/><rect x="10" y="3" width="3" height="2"/>
<rect x="1" y="6" width="2" height="2"/><rect x="4" y="6" width="2" height="2" fill="#b4c3dc"/><rect x="7" y="6" width="2" height="2"/>
<rect x="1" y="9" width="2" height="2"/><rect x="4" y="9" width="2" height="2"/><rect x="7" y="9" width="2" height="2"/><rect x="10" y="9" width="3" height="2"/></g>
<rect x="9.500" y="5.500" width="4" height="3" fill="#1d6c9c"/><rect x="10.300" y="6" width="2.400" height="2" fill="#45cdfb"/></svg></div>
<div class="c" style="left:93px;width:73px;letter-spacing:.1px">119</div>
<div class="c" style="left:166px;width:31px"><div class="circ" style="background:#fff;border-color:#6a6a6a;left:3.6px;top:1.8px;width:14px;height:14px"></div></div>
<div class="c" style="left:197px;width:171px;padding-left:48.4px;letter-spacing:.43px">Cycle 5</div>
<div class="c" style="left:368px;width:73px"><div style="overflow:hidden;width:68px">0 dagen</div></div>
<div class="c" style="left:441px;width:108px">woe 12-6-19</div>
<div class="c" style="left:549px;width:108px">woe 12-6-19</div>
<div class="c" style="left:657px;width:31px"><svg class="ic" style="left:3px;top:5px" width="18" height="13" viewBox="0 0 18 13"><rect x="0" y="0.300" width="14" height="6" fill="#4a7fbe"/><path d="M8.500 8.200h6M12 5.200l3.200 3-3.200 3" fill="none" stroke="#fff" stroke-width="3.400"/><path d="M8.800 8.200h6M12 5.400l3 2.800-3 2.800" fill="none" stroke="#555" stroke-width="1.500"/></svg></div>
<div class="c" style="left:688px;width:45px"></div>
<div class="c" style="left:733px;width:94px"></div>
<div class="c" style="left:827px;width:45px;letter-spacing:0">0%</div>
<div class="c" style="left:872px;width:150px;padding-right:3px"></div>
<div class="c" style="left:1022px;width:23px"></div>
</div>
<div class="r b" style="top:830px;height:21px">
<div class="rn">39</div>
<div class="c" style="left:41px;width:52px ;border-left-color:#b4b4b4"></div>
<div class="c" style="left:93px;width:73px;letter-spacing:.1px">120</div>
<div class="c" style="left:166px;width:31px"></div>
<div class="c" style="left:197px;width:171px;padding-left:32.4px;letter-spacing:.43px"><svg class="ic" style="left:19.8px;top:5.4px" width="7" height="7" viewBox="0 0 7 7"><polygon points="5.900,0 5.900,5.700 0,5.700" fill="#3a3a3a"/></svg>Process Control</div>
<div class="c" style="left:368px;width:73px"><div style="overflow:hidden;width:68px">66,1 dagen</div></div>
<div class="c" style="left:441px;width:108px">maa 12-11-18</div>
<div class="c" style="left:549px;width:108px">din 12-2-19</div>
<div class="c" style="left:657px;width:31px"><svg class="ic" style="left:3px;top:5px" width="18" height="13" viewBox="0 0 18 13"><rect x="0" y="0.300" width="14" height="6" fill="#4a7fbe"/><path d="M8.500 8.200h6M12 5.200l3.200 3-3.200 3" fill="none" stroke="#fff" stroke-width="3.400"/><path d="M8.800 8.200h6M12 5.400l3 2.800-3 2.800" fill="none" stroke="#555" stroke-width="1.500"/></svg></div>
<div class="c" style="left:688px;width:45px"></div>
<div class="c" style="left:733px;width:94px"></div>
<div class="c" style="left:827px;width:45px;letter-spacing:0">23%</div>
<div class="c" style="left:872px;width:150px;padding-right:3px"></div>
<div class="c" style="left:1022px;width:23px"></div>
</div>
<div class="r b" style="top:851px;height:21px">
<div class="rn">40</div>
<div class="c" style="left:41px;width:52px ;border-left-color:#b4b4b4"></div>
<div class="c" style="left:93px;width:73px;letter-spacing:.1px">121</div>
<div class="c" style="left:166px;width:31px"></div>
<div class="c" style="left:197px;width:171px;padding-left:48.4px;letter-spacing:.43px"><svg class="ic" style="left:35.8px;top:5.4px" width="7" height="7" viewBox="0 0 7 7"><polygon points="5.900,0 5.900,5.700 0,5.700" fill="#3a3a3a"/></svg>Cycle 4</div>
<div class="c" style="left:368px;width:73px"><div style="overflow:hidden;width:68px">21,1 dagen</div></div>
<div class="c" style="left:441px;width:108px">maa 14-1-19</div>
<div class="c" style="left:549px;width:108px">din 12-2-19</div>
<div class="c" style="left:657px;width:31px"><svg class="ic" style="left:3px;top:5px" width="18" height="13" viewBox="0 0 18 13"><rect x="0" y="0.300" width="14" height="6" fill="#4a7fbe"/><path d="M8.500 8.200h6M12 5.200l3.200 3-3.200 3" fill="none" stroke="#fff" stroke-width="3.400"/><path d="M8.800 8.200h6M12 5.400l3 2.800-3 2.800" fill="none" stroke="#555" stroke-width="1.500"/></svg></div>
<div class="c" style="left:688px;width:45px"></div>
<div class="c" style="left:733px;width:94px"></div>
<div class="c" style="left:827px;width:45px;letter-spacing:0">23%</div>
<div class="c" style="left:872px;width:150px;padding-right:3px"></div>
<div class="c" style="left:1022px;width:23px"></div>
</div>
<div class="r" style="top:872px;height:21px">
<div class="rn">41</div>
<div class="c" style="left:41px;width:52px ;border-left-color:#b4b4b4"><svg class="ic" style="left:2px;top:1px" width="17" height="17" viewBox="0 0 17 17"><rect x="0" y="0" width="14" height="12" fill="#44618f"/><rect x="0" y="0" width="14" height="2.600" fill="#5b80d6"/><rect x="1" y="1" width="12" height="1" fill="#8eaaf2"/>
<g fill="#fff"><rect x="1" y="3" width="2" height="2"/><rect x="4" y="3" width="2" height="2"/><rect x="7" y="3" width="2" height="2"/><rect x="10" y="3" width="3" height="2"/>
<rect x="1" y="6" width="2" height="2"/><rect x="7" y="6" width="2" height="2"/><rect x="10" y="6" width="3" height="2"/>
<rect x="1" y="9" width="2" height="2"/><rect x="4" y="9" width="2" height="2"/><rect x="7" y="9" width="2" height="2"/><rect x="10" y="9" width="3" height="2"/></g>
<rect x="3.300" y="5" width="3.600" height="3.800" fill="#b01020"/><rect x="4.200" y="5.800" width="1.800" height="2" fill="#ff7a7a"/>
<polygon points="10,5.900 15.700,15.600 4.300,15.600" fill="#f5dc3a" stroke="#e8c81e" stroke-width=".8" stroke-linejoin="round"/><rect x="9.300" y="9" width="1.400" height="3.600" fill="#111"/><rect x="9.300" y="13.400" width="1.400" height="1.300" fill="#111"/></svg></div>
<div class="c" style="left:93px;width:73px">122</div>
<div class="c" style="left:166px;width:31px"><div class="circ" style="background:#e0694a;border-color:#8a4a3a"></div></div>
<div class="c" style="left:197px;width:171px;padding-left:64.4px">Del. Gg</div>
<div class="c" style="left:368px;width:73px"><div style="overflow:hidden;width:68px">0,1 dagen</div></div>
<div class="c" style="left:441px;width:108px">din 12-2-19</div>
<div class="c" style="left:549px;width:108px">din 12-2-19</div>
<div class="c" style="left:657px;width:31px"><svg class="ic" style="left:3px;top:5px" width="18" height="13" viewBox="0 0 18 13"><rect x="0" y="0.300" width="14" height="6" fill="#4a7fbe"/><path d="M8.500 8.200h6M12 5.200l3.200 3-3.200 3" fill="none" stroke="#fff" stroke-width="3.400"/><path d="M8.800 8.200h6M12 5.400l3 2.800-3 2.800" fill="none" stroke="#555" stroke-width="1.500"/></svg></div>
<div class="c" style="left:688px;width:45px"></div>
<div class="c" style="left:733px;width:94px"></div>
<div class="c" style="left:827px;width:45px">56%</div>
<div class="c" style="left:872px;width:150px;padding-right:3px"><div style="overflow:hidden;width:145px">Res_27M;Res_28M;Res_29M;Res_30M</div></div>
<div class="c" style="left:1022px;width:23px">Not started</div>
</div>
<div class="abs" style="left:0;top:20px;width:1045px;height:1px;background:#6e6e6e"></div>
</div>
<div class="abs" style="left:65px;top:117px;width:55px;height:24px;border:2px solid #2b6e2b"></div>
<div id="divider"></div>
<div id="ghead">
<svg width="560" height="55" viewBox="1075 64 560 55"><g stroke="#c4c4c4" stroke-width="1">
<path d="M1111.5 101v17"/>
<path d="M1148.5 101v17"/>
<path d="M1185.5 101v17"/>
<path d="M1222.5 101v17"/>
<path d="M1259.5 101v17"/>
<path d="M1296.5 101v17"/>
<path d="M1333.5 101v17"/>
<path d="M1370.5 101v17"/>
<path d="M1407.5 101v17"/>
<path d="M1444.5 101v17"/>
<path d="M1481.5 101v17"/>
<path d="M1518.5 101v17"/>
<path d="M1555.5 101v17"/>
<path d="M1592.5 101v17"/>
<path d="M1629.5 101v17"/>
<path d="M1666.5 101v17"/>
<path d="M1158.5 76v17"/>
<path d="M1322.5 76v17"/>
<path d="M1470.5 76v17"/>
</g></svg>
<div class="gt" style="left:-0.2px;top:33.8px;width:37px;text-align:center;letter-spacing:-.6px">16</div>
<div class="gt" style="left:36.8px;top:33.8px;width:37px;text-align:center;letter-spacing:-.6px">23</div>
<div class="gt" style="left:73.8px;top:33.8px;width:37px;text-align:center;letter-spacing:-.6px">30</div>
<div class="gt" style="left:110.8px;top:33.8px;width:37px;text-align:center;letter-spacing:-.6px">6</div>
<div class="gt" style="left:147.8px;top:33.8px;width:37px;text-align:center;letter-spacing:-.6px">13</div>
<div class="gt" style="left:184.8px;top:33.8px;width:37px;text-align:center;letter-spacing:-.6px">20</div>
<div class="gt" style="left:221.8px;top:33.8px;width:37px;text-align:center;letter-spacing:-.6px">27</div>
<div class="gt" style="left:258.8px;top:33.8px;width:37px;text-align:center;letter-spacing:-.6px">3</div>
<div class="gt" style="left:295.8px;top:33.8px;width:37px;text-align:center;letter-spacing:-.6px">10</div>
<div class="gt" style="left:332.8px;top:33.8px;width:37px;text-align:center;letter-spacing:-.6px">17</div>
<div class="gt" style="left:369.8px;top:33.8px;width:37px;text-align:center;letter-spacing:-.6px">24</div>
<div class="gt" style="left:406.8px;top:33.8px;width:37px;text-align:center;letter-spacing:-.6px">3</div>
<div class="gt" style="left:443.8px;top:33.8px;width:37px;text-align:center;letter-spacing:-.6px">10</div>
<div class="gt" style="left:480.8px;top:33.8px;width:37px;text-align:center;letter-spacing:-.6px">17</div>
<div class="gt" style="left:517.8px;top:33.8px;width:37px;text-align:center;letter-spacing:-.6px">24</div>
<div class="gt" style="left:89.5px;top:15.4px;letter-spacing:-.2px">jan '19</div>
<div class="gt" style="left:253.5px;top:15.4px;letter-spacing:-.2px">feb '19</div>
<div class="gt" style="left:401.5px;top:15.4px;letter-spacing:-.2px">mrt '19</div>
</div>
<div class="abs" style="left:0;top:64px;width:1635px;height:1px;background:#e9f2e9;opacity:.85"></div>
<svg width="1635" height="1011" viewBox="0 0 1635 1011" style="pointer-events:none">
<defs><clipPath id="gc"><rect x="1075" y="119" width="560" height="892"/></clipPath></defs>
<g clip-path="url(#gc)">
<rect x="1070" y="139" width="565" height="1" fill="#6e6e6e"/>
<rect x="1075" y="124" width="565" height="2" fill="#404040"/>
<rect x="1075" y="145" width="565" height="2" fill="#404040"/>
<rect x="1194" y="208" width="48" height="2" fill="#404040"/>
<rect x="1194" y="208" width="3" height="11" fill="#404040"/>
<rect x="1239" y="208" width="3" height="11" fill="#404040"/>
<rect x="1263" y="670" width="377" height="2" fill="#404040"/>
<rect x="1263" y="670" width="3" height="11" fill="#404040"/>
<rect x="1263" y="691" width="377" height="2" fill="#404040"/>
<rect x="1263" y="691" width="3" height="11" fill="#404040"/>
<rect x="1268" y="828" width="372" height="2" fill="#404040"/>
<rect x="1268" y="828" width="3" height="11" fill="#404040"/>
<rect x="1268.500" y="849" width="4.500" height="10.500" fill="#404040"/>
<rect x="1070" y="954" width="314" height="2" fill="#404040"/>
<rect x="1381" y="954" width="3" height="11" fill="#404040"/>
<rect x="1226" y="975" width="158" height="2" fill="#404040"/>
<rect x="1226" y="975" width="3" height="11" fill="#404040"/>
<rect x="1381" y="975" width="3" height="11" fill="#404040"/>
<rect x="1228" y="229.3" width="8" height="10.400" fill="#8bbcec"/>
<rect x="1228" y="250.3" width="13" height="10.400" fill="#8bbcec"/>
<rect x="1196" y="271.3" width="8" height="10.400" fill="#8bbcec"/>
<rect x="1196" y="275.2" width="3" height="2.600" fill="#3a80d0"/>
<rect x="1205" y="292.3" width="26" height="10.400" fill="#8bbcec"/>
<rect x="1205" y="296.2" width="10" height="2.600" fill="#3a80d0"/>
<rect x="1196" y="313.3" width="3" height="10.400" fill="#8bbcec"/>
<rect x="1196" y="334.3" width="8" height="10.400" fill="#8bbcec"/>
<rect x="1205" y="355.3" width="31" height="10.400" fill="#8bbcec"/>
<rect x="1205" y="359.2" width="11" height="2.600" fill="#3a80d0"/>
<rect x="1199.3" y="376.3" width="4.7" height="10.400" fill="#8bbcec"/>
<rect x="1199.3" y="397.3" width="2.7" height="10.400" fill="#8bbcec"/>
<rect x="1212" y="418.3" width="19" height="10.400" fill="#8bbcec"/>
<rect x="1196" y="439.3" width="16" height="10.400" fill="#8bbcec"/>
<rect x="1196" y="460.3" width="6.5" height="10.400" fill="#8bbcec"/>
<rect x="1196" y="481.3" width="3" height="10.400" fill="#8bbcec"/>
<rect x="1196" y="502.3" width="7.5" height="10.400" fill="#8bbcec"/>
<rect x="1199.3" y="523.3" width="7.7" height="10.400" fill="#8bbcec"/>
<rect x="1196" y="544.3" width="11" height="10.400" fill="#8bbcec"/>
<rect x="1265" y="786.3" width="85" height="10.400" fill="#8bbcec"/>
<rect x="1265" y="790.2" width="13" height="2.600" fill="#3a80d0"/>
<rect x="1272.1" y="870.3" width="0.9" height="10.400" fill="#8fb6e6"/>
<rect x="1270.3" y="891.3" width="1.8" height="10.400" fill="#8fb6e6"/>
<rect x="1270.3" y="895.2" width="1.8" height="2.600" fill="#4a8ad4"/>
<rect x="1270.3" y="912.3" width="1.8" height="10.400" fill="#8fb6e6"/>
<rect x="1270.3" y="916.2" width="1.8" height="2.600" fill="#4a8ad4"/>
<rect x="1381.1" y="996.3" width="1.9" height="10.400" fill="#8fb6e6"/>
<rect x="1381.1" y="1000.2" width="1.9" height="2.600" fill="#4a8ad4"/>
<g fill="none" stroke="#3a80d0" stroke-width="1.100">
<path d="M1204 276h2a1.700 1.700 0 0 1 1.700 1.700V354"/>
<polygon points="1203.2,287 1212.2,287 1207.7,291.5" fill="#3a80d0" stroke="none"/>
<polygon points="1203.2,350 1212.2,350 1207.7,354.5" fill="#3a80d0" stroke="none"/>
<path d="M1199 318h1.800a1.700 1.700 0 0 1 1.700 1.700V522"/>
<polygon points="1198,371 1207,371 1202.5,375.5" fill="#3a80d0" stroke="none"/>
<polygon points="1198,392 1207,392 1202.5,396.5" fill="#3a80d0" stroke="none"/>
<polygon points="1198,518 1207,518 1202.5,522.5" fill="#3a80d0" stroke="none"/>
<path d="M1202 402h8a1.700 1.700 0 0 1 1.700 1.700V417"/>
<polygon points="1207.2,413 1216.2,413 1211.7,417.5" fill="#3a80d0" stroke="none"/>
<path d="M1212 444h2a1.700 1.700 0 0 0 1.700-1.700V430"/>
<polygon points="1211.2,433.5 1220.2,433.5 1215.7,429" fill="#3a80d0" stroke="none"/>
<path d="M1272 894h2.300a1.500 1.500 0 0 0 1.500-1.500V883"/>
<polygon points="1271.2,885.5 1280.2,885.5 1275.7,881" fill="#3a80d0" stroke="none"/>
</g>
<g font-family="Liberation Sans, Arial, sans-serif" font-weight="bold" font-size="13.5" fill="#000">
<text x="1210.3" y="278.5" textLength="144.9" lengthAdjust="spacingAndGlyphs">Res_09M;Res_10M[20%]</text>
<text x="1237.4" y="299.5" textLength="85.4" lengthAdjust="spacingAndGlyphs">Res_11M[33%]</text>
<text x="1205.7" y="320.5" textLength="53.6" lengthAdjust="spacingAndGlyphs">Res_12M</text>
<text x="1210.5" y="341.5" textLength="144.9" lengthAdjust="spacingAndGlyphs">Res_09M;Res_10M[20%]</text>
<text x="1242.4" y="362.5" textLength="85.4" lengthAdjust="spacingAndGlyphs">Res_11M[33%]</text>
<text x="1210.5" y="383.5" textLength="85.3" lengthAdjust="spacingAndGlyphs">Res_12M[40%]</text>
<text x="1209" y="404.5" textLength="85.1" lengthAdjust="spacingAndGlyphs">Res_13M[45%]</text>
<text x="1237.6" y="425.5" textLength="85.1" lengthAdjust="spacingAndGlyphs">Res_14M[50%]</text>
<text x="1218.6" y="446.5" textLength="85.4" lengthAdjust="spacingAndGlyphs">Res_11M[33%]</text>
<text x="1208.2" y="467.5" textLength="85.3" lengthAdjust="spacingAndGlyphs">Res_12M[40%]</text>
<text x="1205.5" y="488.5" textLength="85.1" lengthAdjust="spacingAndGlyphs">Res_13M[45%]</text>
<text x="1210.4" y="509.5" textLength="85.1" lengthAdjust="spacingAndGlyphs">Res_14M[50%]</text>
<text x="1213.7" y="530.5" textLength="85.3" lengthAdjust="spacingAndGlyphs">Res_12M[40%]</text>
<text x="1213.7" y="551.5" textLength="85.4" lengthAdjust="spacingAndGlyphs">Res_11M[33%]</text>
<text x="1356.5" y="793.5" textLength="203.8" lengthAdjust="spacingAndGlyphs">Res_20M;Res_21M;Res_22M[45%]</text>
<text x="1278.1" y="877.5" textLength="231.0" lengthAdjust="spacingAndGlyphs">Res_23M;Res_24M;Res_25M;Res_26M</text>
<text x="1278.1" y="898.5" textLength="231.0" lengthAdjust="spacingAndGlyphs">Res_23M;Res_24M;Res_25M;Res_26M</text>
<text x="1278.1" y="919.5" textLength="231.0" lengthAdjust="spacingAndGlyphs">Res_23M;Res_24M;Res_25M;Res_26M</text>
<text x="1389.5" y="1003.5" textLength="231.4" lengthAdjust="spacingAndGlyphs">Res_27M;Res_28M;Res_29M;Res_30M</text>
</g>
</g></svg>
</body></html>
